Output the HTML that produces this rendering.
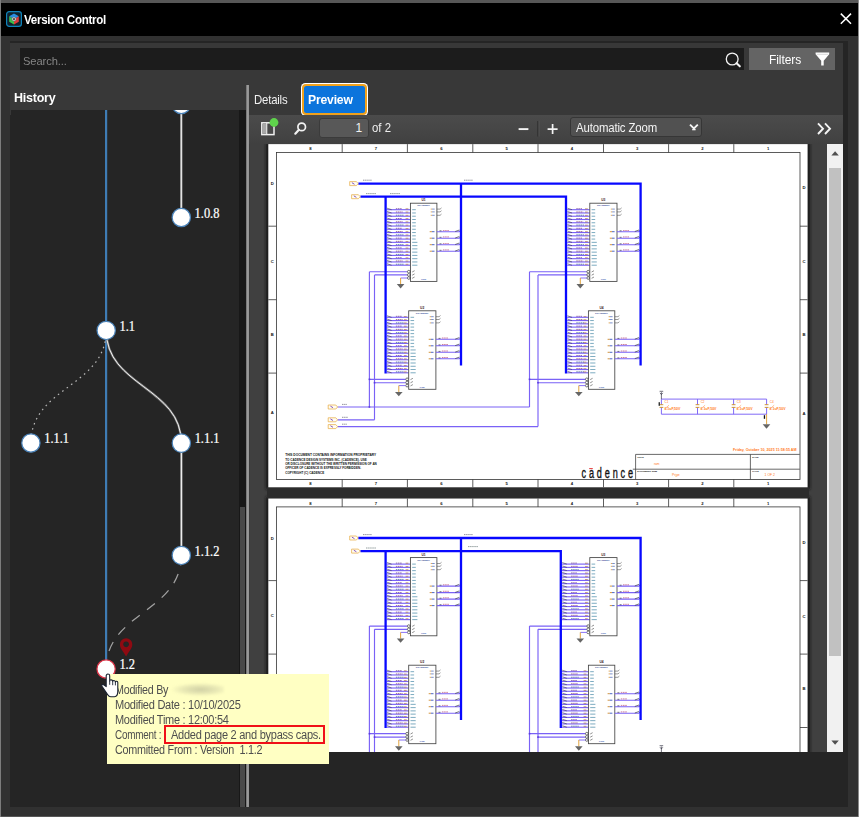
<!DOCTYPE html>
<html lang="en"><head><meta charset="utf-8"><title>Version Control</title>
<style>
*{box-sizing:border-box;margin:0;padding:0}
.sx{display:inline-block;transform-origin:0 50%;white-space:pre}
html,body{width:859px;height:817px;overflow:hidden}
body{position:relative;background:linear-gradient(90deg,#7c7c7c 0,#7c7c7c 1.4px,#575757 1.4px,#575757 857.8px,#8a8a8a 857.8px);font-family:"Liberation Sans",sans-serif;color:#fff}
.abs{position:absolute}
.win{left:1.4px;top:2.5px;width:856.4px;height:813.2px;background:#313131}
.title{left:1.4px;top:2.5px;width:856.6px;height:33px;background:#000}
.title .txt{left:23px;top:9.2px;font-size:12.4px;font-weight:bold;white-space:nowrap;line-height:16px}
.inner{left:10.4px;top:41px;width:837.6px;height:765.6px;background:#252525}
.top{left:10.4px;top:43px;width:832.8px;height:71.5px;background:#383838}
.search{left:20px;top:48px;width:724px;height:22.4px;background:#1c1c1c}
.search .ph{left:2.8px;top:5.2px;font-size:11.6px;color:#858585;line-height:16px}
.filters{left:749px;top:48px;width:86px;height:22.4px;background:#646464}
.filters .txt{left:20px;top:4.3px;font-size:12.4px;line-height:16px;color:#fff}
.hist{left:14.4px;top:89.6px;font-size:13.2px;font-weight:bold;line-height:16px}
.graphbox{left:10.5px;top:109.5px;width:229px;height:697px;background:#252525;overflow:hidden}
.graph{display:block}
.track{left:239.3px;top:109.5px;width:6.6px;height:697px;background:#181818}
.thumb{left:240px;top:507px;width:4.9px;height:299.6px;background:#494949}
.split{left:246px;top:84.8px;width:3.1px;height:721.8px;background:linear-gradient(90deg,#6a6a6a,#a2a2a2 60%,#8c8c8c)}
.tabtxt{left:253.6px;top:92.4px;font-size:12.2px;line-height:16px;color:#f0f0f0}
.tabsel{left:300.8px;top:83.3px;width:67.6px;height:32.7px;border-radius:4.5px;background:#fff;}
.tabsel .o{left:1px;top:1px;right:1px;bottom:1px;border-radius:4px;background:#f0a11c}
.tabsel .b{left:3px;top:3px;right:3px;bottom:3px;border-radius:2.5px;background:#0b74dc}
.tabsel .txt{left:7px;top:9.2px;font-size:12.6px;font-weight:bold;line-height:16px;color:#fff}
.tool{left:249.2px;top:114.5px;width:594px;height:29.6px;background:linear-gradient(#4b4b4b,#454545 60%,#404040)}
.viewer{position:absolute;left:250px;top:144px;display:block}
.vleft{left:249.2px;top:144px;width:0.8px;height:608px;background:#3c3c3c}
.sb{left:827px;top:144px;width:16.2px;height:608px;background:#f1f1f1}
.sbthumb{left:829.4px;top:167.5px;width:11.6px;height:488.5px;background:#c1c1c1}
.pgin{left:318.8px;top:117.9px;width:50px;height:19.8px;border-radius:3px;background:#585858;border:1px solid #3b3b3b}
.pgin .txt{right:5.6px;top:2px;font-size:12px;line-height:15px;color:#f2f2f2}
.of{left:372.4px;top:121px;font-size:12px;line-height:15px;color:#f0f0f0}
.sel{left:569.8px;top:117.2px;width:132.6px;height:20.2px;border-radius:3px;background:#515151;border:1px solid #363636}
.sel .txt{left:5.2px;top:2.7px;font-size:12px;line-height:15px;color:#f4f4f4;white-space:nowrap}
.tip{left:107px;top:673.8px;width:222.2px;height:90.4px;background:#ffffc3}
.tip .l{left:8.4px;font-size:12px;line-height:15px;color:#4e4e4e;white-space:pre}
.red{left:164.2px;top:724.8px;width:160.4px;height:19.6px;border:2.6px solid #f01018}
.blur{left:171px;top:683px;width:53px;height:13px;background:radial-gradient(ellipse at 55% 50%,rgba(170,170,140,.55),rgba(200,200,160,.38) 45%,rgba(255,255,195,0) 72%);filter:blur(1.2px)}
</style></head><body>
<div class="abs win"></div>
<div class="abs title">
<svg class="abs" style="left:4.4px;top:8.4px" width="16" height="16" viewBox="0 0 16 16"><rect x="0.6" y="0.6" width="14.8" height="14.8" rx="2.6" fill="#10222c" stroke="#0f84bc" stroke-width="1.2"/><path d="M8,2.6L12.8,5.3L10.2,6.9L8,5.7L5.8,6.9L3.2,5.3z" fill="#2a8fe0"/><path d="M12.8,5.3V10.8L8,13.5V10.6L10.2,9.3V6.9z" fill="#e03a3a"/><path d="M3.2,5.3V10.8L8,13.5V10.6L5.8,9.3V6.9z" fill="#3cc04a"/><path d="M8,5.7L10.2,6.9V9.3L8,10.6L5.8,9.3V6.9z" fill="#b8b8b8"/><rect x="7" y="7.2" width="2" height="1.8" fill="#555"/></svg>
<div class="abs txt"><span class="sx" style="letter-spacing:-0.3px;transform:scaleX(0.9348)">Version Control</span></div>
<svg class="abs" style="left:838px;top:9.5px" width="14" height="14" viewBox="0 0 14 14"><path d="M1.8,1.6L12,11.8M12,1.6L1.8,11.8" stroke="#fff" stroke-width="1.5"/></svg>
</div>
<div class="abs inner"></div>
<div class="abs top"></div>
<div class="abs search"><div class="abs ph"><span class="sx" style="letter-spacing:-0.1px;transform:scaleX(0.9621)">Search...</span></div><svg class="abs" style="left:703px;top:2.6px" width="20" height="18" viewBox="0 0 20 18"><circle cx="9.2" cy="8" r="5.9" fill="none" stroke="#f4f4f4" stroke-width="1.3"/><path d="M13.6,12.3L16.8,15.3" stroke="#f4f4f4" stroke-width="2.1" stroke-linecap="round"/></svg></div>
<div class="abs filters"><div class="abs txt"><span class="sx" style="letter-spacing:-0.1px;transform:scaleX(0.9711)">Filters</span></div><svg class="abs" style="left:65px;top:3px" width="18" height="17" viewBox="0 0 18 17"><path d="M1.6,1.6H15.2V3.2L9.7,9.8V14.4L7.2,14.4V9.8L1.6,3.2z" fill="#fff"/><path d="M2.6,3.3H14.2" stroke="#d0d0d0" stroke-width="0.8"/></svg></div>
<div class="abs hist"><span class="sx" style="letter-spacing:-0.25px;transform:scaleX(0.9490)">History</span></div>
<div class="abs graphbox"><svg class="graph" width="229" height="697" viewBox="10.5 109.5 229 697" font-family="Liberation Serif, serif" font-size="13.8">
<path d="M105.6,100V660" stroke="#3f7cb4" stroke-width="2.2"/>
<path d="M180.8,100V217" stroke="#8a8a8a" stroke-width="2.4"/><path d="M180.8,100V217" stroke="#f2f2f2" stroke-width="1.1"/>
<path d="M180.9,442V555" stroke="#8a8a8a" stroke-width="2.4"/><path d="M180.9,442V555" stroke="#f2f2f2" stroke-width="1.1"/>
<path d="M105.7,329.9C105.7,386.25 180.85,386.25 180.85,442.6" stroke="#777" stroke-width="2.2" fill="none"/><path d="M105.7,329.9C105.7,386.25 180.85,386.25 180.85,442.6" stroke="#f0f0f0" stroke-width="1" fill="none"/>
<path d="M105.7,329.9C105.7,386.20 30.4,386.20 30.4,442.5" stroke="#b8b8b8" stroke-width="1.2" fill="none" stroke-dasharray="1.6 3.9"/>
<path d="M180.8,554.9C180.8,611.70 105.6,611.70 105.6,668.5" stroke="#a2a2a2" stroke-width="1.25" fill="none" stroke-dasharray="10 9"/>
<circle cx="180.8" cy="104" r="9.15" fill="#fff" stroke="#4a82b8" stroke-width="1.25"/>
<circle cx="180.8" cy="217" r="9.15" fill="#fff" stroke="#4a82b8" stroke-width="1.25"/>
<text transform="translate(194.1,217.3) scale(0.9,1)" fill="#fff" stroke="#fff" stroke-width="0.25">1.0.8</text>
<circle cx="105.7" cy="329.9" r="9.15" fill="#fff" stroke="#4a82b8" stroke-width="1.25"/>
<text transform="translate(119,330.2) scale(0.9,1)" fill="#fff" stroke="#fff" stroke-width="0.25">1.1</text>
<circle cx="30.4" cy="442.5" r="9.15" fill="#fff" stroke="#4a82b8" stroke-width="1.25"/>
<text transform="translate(43.7,442.8) scale(0.9,1)" fill="#fff" stroke="#fff" stroke-width="0.25">1.1.1</text>
<circle cx="180.85" cy="442.6" r="9.15" fill="#fff" stroke="#4a82b8" stroke-width="1.25"/>
<text transform="translate(194.15,442.9) scale(0.9,1)" fill="#fff" stroke="#fff" stroke-width="0.25">1.1.1</text>
<circle cx="180.8" cy="554.9" r="9.15" fill="#fff" stroke="#4a82b8" stroke-width="1.25"/>
<text transform="translate(194.1,555.2) scale(0.9,1)" fill="#fff" stroke="#fff" stroke-width="0.25">1.1.2</text>
<circle cx="105.6" cy="668.5" r="9.15" fill="#fff" stroke="#dc3448" stroke-width="1.25"/>
<text transform="translate(118.9,668.8) scale(0.9,1)" fill="#fff" stroke="#fff" stroke-width="0.25">1.2</text>
<path transform="translate(-0.7,0)" d="M126.3,655.9C123.6,651 120.1,647.6 120.1,643.9a6.2,6.2 0 1 1 12.4,0C132.5,647.6 129,651 126.3,655.9zM126.3,640.9a2.9,2.9 0 1 0 0.01,0z" fill="#8e0a12" fill-rule="evenodd"/>
</svg></div>
<div class="abs track"></div><div class="abs thumb"></div>
<div class="abs split"></div>
<div class="abs tabtxt"><span class="sx" style="letter-spacing:-0.2px;transform:scaleX(0.9334)">Details</span></div>
<div class="abs tabsel"><div class="abs o"></div><div class="abs b"></div><div class="abs txt"><span class="sx" style="letter-spacing:-0.2px;transform:scaleX(0.9669)">Preview</span></div></div>
<div class="abs tool"></div>
<svg class="abs" style="left:259px;top:116px" width="52" height="24" viewBox="259 116 52 24"><rect x="261.8" y="122.8" width="12.2" height="11.8" fill="#4a4a4a" stroke="#f0f0f0" stroke-width="1.5"/><rect x="262.6" y="123.6" width="4" height="10.2" fill="#a8a8a8"/><rect x="266.2" y="123" width="1.1" height="11.4" fill="#f0f0f0"/><circle cx="274" cy="122.5" r="4.4" fill="#5fd44c"/><circle cx="301.7" cy="126.9" r="3.8" fill="none" stroke="#f2f2f2" stroke-width="1.7"/><path d="M298.9,129.8L295.3,133.7" stroke="#f2f2f2" stroke-width="2.2" stroke-linecap="round"/></svg>
<div class="abs pgin"><div class="abs txt">1</div></div><div class="abs of"><span class="sx" style="letter-spacing:0px;transform:scaleX(0.9493)">of 2</span></div>
<svg class="abs" style="left:514px;top:118px" width="48" height="22" viewBox="514 118 48 22"><path d="M518.6,129.1h9.8" stroke="#f4f4f4" stroke-width="1.9"/><path d="M537.9,121v15.5" stroke="#2f2f2f" stroke-width="1.3"/><path d="M539,121v15.5" stroke="#585858" stroke-width="0.8"/><path d="M547.6,129.1h10M552.6,124.1v10" stroke="#f4f4f4" stroke-width="1.7"/></svg>
<div class="abs sel"><div class="abs txt"><span class="sx" style="letter-spacing:-0.15px;transform:scaleX(0.9500)">Automatic Zoom</span></div><svg class="abs" style="left:117.6px;top:5.2px" width="12" height="10" viewBox="0 0 12 10"><path d="M2,1.6L5.9,5.4L9.8,1.6" stroke="#f4f4f4" stroke-width="1.9" fill="none"/><path d="M4.2,6.6h3.4" stroke="#f4f4f4" stroke-width="1.4"/></svg></div>
<svg class="abs" style="left:815px;top:121px" width="18" height="16" viewBox="815 121 18 16"><path d="M818,123.4l5,5.3l-5,5.3M825,123.4l5,5.3l-5,5.3" stroke="#f4f4f4" stroke-width="1.9" fill="none"/></svg>
<div class="abs vleft"></div>
<svg class="viewer" width="577" height="608" viewBox="250 144 577 608">
<defs><linearGradient id="vg" x1="0" x2="1" y1="0" y2="0"><stop offset="0" stop-color="#3a3a3a"/><stop offset="0.5" stop-color="#454545"/><stop offset="1" stop-color="#3c3c3c"/></linearGradient></defs>
<rect x="250" y="144" width="577" height="608" fill="#404040"/>
<filter id="sh" x="-5%" y="-5%" width="110%" height="110%"><feGaussianBlur stdDeviation="1.5"/></filter>
<rect x="266" y="142.4" width="544" height="347" fill="#161616" filter="url(#sh)"/>
<rect x="266" y="496.6" width="544" height="347" fill="#161616" filter="url(#sh)"/>
<rect x="267" y="487.3" width="542" height="10.7" fill="#2c2c2c"/>
<g transform="translate(0,0)" font-family="Liberation Sans, sans-serif">
<rect x="268.3" y="144.1" width="539.3" height="343.2" fill="#fff"/>
<rect x="276.4" y="152.5" width="523.6" height="327" fill="none" stroke="#333" stroke-width="0.8"/>
<path d="M342.2,144.1V152.5M342.2,479.5V487.3M407.4,144.1V152.5M407.4,479.5V487.3M472.8,144.1V152.5M472.8,479.5V487.3M538,144.1V152.5M538,479.5V487.3M603.5,144.1V152.5M603.5,479.5V487.3M668.6,144.1V152.5M668.6,479.5V487.3M733.8,144.1V152.5M733.8,479.5V487.3M268.3,226.2H276.4M800,226.2H807.6M268.3,299.7H276.4M800,299.7H807.6M268.3,373.1H276.4M800,373.1H807.6" stroke="#333" stroke-width="0.8"/>
<text x="310.5" y="150.4" font-size="4.2" font-weight="bold" text-anchor="middle" fill="#111">8</text>
<text x="310.5" y="485.2" font-size="4.2" font-weight="bold" text-anchor="middle" fill="#111">8</text>
<text x="376" y="150.4" font-size="4.2" font-weight="bold" text-anchor="middle" fill="#111">7</text>
<text x="376" y="485.2" font-size="4.2" font-weight="bold" text-anchor="middle" fill="#111">7</text>
<text x="441.3" y="150.4" font-size="4.2" font-weight="bold" text-anchor="middle" fill="#111">6</text>
<text x="441.3" y="485.2" font-size="4.2" font-weight="bold" text-anchor="middle" fill="#111">6</text>
<text x="506.6" y="150.4" font-size="4.2" font-weight="bold" text-anchor="middle" fill="#111">5</text>
<text x="506.6" y="485.2" font-size="4.2" font-weight="bold" text-anchor="middle" fill="#111">5</text>
<text x="571.95" y="150.4" font-size="4.2" font-weight="bold" text-anchor="middle" fill="#111">4</text>
<text x="571.95" y="485.2" font-size="4.2" font-weight="bold" text-anchor="middle" fill="#111">4</text>
<text x="637.25" y="150.4" font-size="4.2" font-weight="bold" text-anchor="middle" fill="#111">3</text>
<text x="637.25" y="485.2" font-size="4.2" font-weight="bold" text-anchor="middle" fill="#111">3</text>
<text x="702.4" y="150.4" font-size="4.2" font-weight="bold" text-anchor="middle" fill="#111">2</text>
<text x="702.4" y="485.2" font-size="4.2" font-weight="bold" text-anchor="middle" fill="#111">2</text>
<text x="768.1" y="150.4" font-size="4.2" font-weight="bold" text-anchor="middle" fill="#111">1</text>
<text x="768.1" y="485.2" font-size="4.2" font-weight="bold" text-anchor="middle" fill="#111">1</text>
<text x="272.3" y="185.2" font-size="4.2" font-weight="bold" text-anchor="middle" fill="#111">D</text>
<text x="804" y="189.2" font-size="4.2" font-weight="bold" text-anchor="middle" fill="#111">D</text>
<text x="272.3" y="263" font-size="4.2" font-weight="bold" text-anchor="middle" fill="#111">C</text>
<text x="804" y="263.4" font-size="4.2" font-weight="bold" text-anchor="middle" fill="#111">C</text>
<text x="272.3" y="335.7" font-size="4.2" font-weight="bold" text-anchor="middle" fill="#111">B</text>
<text x="804" y="336.1" font-size="4.2" font-weight="bold" text-anchor="middle" fill="#111">B</text>
<text x="272.3" y="414.1" font-size="4.2" font-weight="bold" text-anchor="middle" fill="#111">A</text>
<text x="804" y="414.5" font-size="4.2" font-weight="bold" text-anchor="middle" fill="#111">A</text>
<path d="M369.4,271.7H407.4M374.5,274.9H407.4M369.4,379.3H405.7M374.5,382.7H405.7M369.4,271.7V407M374.5,274.9V419.8M529.5,271.7H586.8M538,274.9H586.8M529.5,379.3H585.4M538,382.7H585.4M529.5,271.7V407M538,274.9V426.6M337.5,407H529.5M337.5,419.8H374.5M337.5,426.6H538" stroke="#7a62f6" stroke-width="1.15" fill="none"/>
<rect x="368.6" y="378.5" width="1.6" height="1.6" fill="#5a3ae0"/>
<rect x="373.7" y="381.9" width="1.6" height="1.6" fill="#5a3ae0"/>
<rect x="528.7" y="378.5" width="1.6" height="1.6" fill="#5a3ae0"/>
<rect x="537.2" y="381.9" width="1.6" height="1.6" fill="#5a3ae0"/>
<rect x="368.6" y="406.2" width="1.6" height="1.6" fill="#5a3ae0"/>
<path d="M386.8,209.7H410.2" stroke="#7a62f6" stroke-width="1.15"/>
<path d="M387,208.2l4.6,1.5" stroke="#3a3a48" stroke-width="0.7" opacity="0.85"/>
<path d="M395.9,208.7h6.2" stroke="#6a3a8a" stroke-width="0.9" stroke-dasharray="1.5 0.6" opacity="0.8"/>
<path d="M405.6,208.8h2.8" stroke="#a0602a" stroke-width="0.7" opacity="0.85"/>
<path d="M412.2,209.7h3.6" stroke="#4a8aa8" stroke-width="0.9" opacity="0.8"/>
<path d="M386.8,212.97H410.2" stroke="#7a62f6" stroke-width="1.15"/>
<path d="M387,211.47l4.6,1.5" stroke="#3a3a48" stroke-width="0.7" opacity="0.85"/>
<path d="M395.9,211.97h6.9" stroke="#80406a" stroke-width="0.9" stroke-dasharray="1.5 0.6" opacity="0.8"/>
<path d="M405.6,212.06h2.8" stroke="#a0602a" stroke-width="0.7" opacity="0.85"/>
<path d="M412.2,212.97h3.6" stroke="#4a8aa8" stroke-width="0.9" opacity="0.8"/>
<path d="M386.8,216.23H410.2" stroke="#7a62f6" stroke-width="1.15"/>
<path d="M387,214.73l4.6,1.5" stroke="#3a3a48" stroke-width="0.7" opacity="0.85"/>
<path d="M395.9,215.23h7.6" stroke="#3a5a8a" stroke-width="0.9" stroke-dasharray="1.5 0.6" opacity="0.8"/>
<path d="M405.6,215.33h2.8" stroke="#a0602a" stroke-width="0.7" opacity="0.85"/>
<path d="M412.2,216.23h3.6" stroke="#4a8aa8" stroke-width="0.9" opacity="0.8"/>
<path d="M386.8,219.5H410.2" stroke="#7a62f6" stroke-width="1.15"/>
<path d="M387,218l4.6,1.5" stroke="#3a3a48" stroke-width="0.7" opacity="0.85"/>
<path d="M395.9,218.5h6.2" stroke="#6a3a8a" stroke-width="0.9" stroke-dasharray="1.5 0.6" opacity="0.8"/>
<path d="M405.6,218.59h2.8" stroke="#a0602a" stroke-width="0.7" opacity="0.85"/>
<path d="M412.2,219.5h3.6" stroke="#4a8aa8" stroke-width="0.9" opacity="0.8"/>
<path d="M386.8,222.76H410.2" stroke="#7a62f6" stroke-width="1.15"/>
<path d="M387,221.26l4.6,1.5" stroke="#3a3a48" stroke-width="0.7" opacity="0.85"/>
<path d="M395.9,221.76h6.9" stroke="#80406a" stroke-width="0.9" stroke-dasharray="1.5 0.6" opacity="0.8"/>
<path d="M405.6,221.86h2.8" stroke="#a0602a" stroke-width="0.7" opacity="0.85"/>
<path d="M412.2,222.76h3.6" stroke="#4a8aa8" stroke-width="0.9" opacity="0.8"/>
<path d="M386.8,226.03H410.2" stroke="#7a62f6" stroke-width="1.15"/>
<path d="M387,224.53l4.6,1.5" stroke="#3a3a48" stroke-width="0.7" opacity="0.85"/>
<path d="M395.9,225.03h7.6" stroke="#3a5a8a" stroke-width="0.9" stroke-dasharray="1.5 0.6" opacity="0.8"/>
<path d="M405.6,225.12h2.8" stroke="#a0602a" stroke-width="0.7" opacity="0.85"/>
<path d="M412.2,226.03h3.6" stroke="#4a8aa8" stroke-width="0.9" opacity="0.8"/>
<path d="M386.8,229.29H410.2" stroke="#7a62f6" stroke-width="1.15"/>
<path d="M387,227.79l4.6,1.5" stroke="#3a3a48" stroke-width="0.7" opacity="0.85"/>
<path d="M395.9,228.29h6.2" stroke="#6a3a8a" stroke-width="0.9" stroke-dasharray="1.5 0.6" opacity="0.8"/>
<path d="M405.6,228.39h2.8" stroke="#a0602a" stroke-width="0.7" opacity="0.85"/>
<path d="M412.2,229.29h3.6" stroke="#4a8aa8" stroke-width="0.9" opacity="0.8"/>
<path d="M386.8,232.56H410.2" stroke="#7a62f6" stroke-width="1.15"/>
<path d="M387,231.06l4.6,1.5" stroke="#3a3a48" stroke-width="0.7" opacity="0.85"/>
<path d="M395.9,231.56h6.9" stroke="#80406a" stroke-width="0.9" stroke-dasharray="1.5 0.6" opacity="0.8"/>
<path d="M405.6,231.66h2.8" stroke="#a0602a" stroke-width="0.7" opacity="0.85"/>
<path d="M412.2,232.56h3.6" stroke="#4a8aa8" stroke-width="0.9" opacity="0.8"/>
<path d="M386.8,235.82H410.2" stroke="#7a62f6" stroke-width="1.15"/>
<path d="M387,234.32l4.6,1.5" stroke="#3a3a48" stroke-width="0.7" opacity="0.85"/>
<path d="M395.9,234.82h7.6" stroke="#3a5a8a" stroke-width="0.9" stroke-dasharray="1.5 0.6" opacity="0.8"/>
<path d="M405.6,234.92h2.8" stroke="#a0602a" stroke-width="0.7" opacity="0.85"/>
<path d="M412.2,235.82h3.6" stroke="#4a8aa8" stroke-width="0.9" opacity="0.8"/>
<path d="M386.8,239.09H410.2" stroke="#7a62f6" stroke-width="1.15"/>
<path d="M387,237.59l4.6,1.5" stroke="#3a3a48" stroke-width="0.7" opacity="0.85"/>
<path d="M395.9,238.09h6.2" stroke="#6a3a8a" stroke-width="0.9" stroke-dasharray="1.5 0.6" opacity="0.8"/>
<path d="M405.6,238.19h2.8" stroke="#a0602a" stroke-width="0.7" opacity="0.85"/>
<path d="M412.2,239.09h3.6" stroke="#4a8aa8" stroke-width="0.9" opacity="0.8"/>
<path d="M386.8,242.35H410.2" stroke="#7a62f6" stroke-width="1.15"/>
<path d="M387,240.85l4.6,1.5" stroke="#3a3a48" stroke-width="0.7" opacity="0.85"/>
<path d="M395.9,241.35h6.9" stroke="#80406a" stroke-width="0.9" stroke-dasharray="1.5 0.6" opacity="0.8"/>
<path d="M405.6,241.45h2.8" stroke="#a0602a" stroke-width="0.7" opacity="0.85"/>
<path d="M412.2,242.35h5.2" stroke="#4a8aa8" stroke-width="0.9" opacity="0.8"/>
<path d="M386.8,245.62H410.2" stroke="#7a62f6" stroke-width="1.15"/>
<path d="M387,244.12l4.6,1.5" stroke="#3a3a48" stroke-width="0.7" opacity="0.85"/>
<path d="M395.9,244.62h7.6" stroke="#3a5a8a" stroke-width="0.9" stroke-dasharray="1.5 0.6" opacity="0.8"/>
<path d="M405.6,244.72h2.8" stroke="#a0602a" stroke-width="0.7" opacity="0.85"/>
<path d="M412.2,245.62h5.2" stroke="#4a8aa8" stroke-width="0.9" opacity="0.8"/>
<path d="M386.8,248.88H410.2" stroke="#7a62f6" stroke-width="1.15"/>
<path d="M387,247.38l4.6,1.5" stroke="#3a3a48" stroke-width="0.7" opacity="0.85"/>
<path d="M395.9,247.88h6.2" stroke="#6a3a8a" stroke-width="0.9" stroke-dasharray="1.5 0.6" opacity="0.8"/>
<path d="M405.6,247.98h2.8" stroke="#a0602a" stroke-width="0.7" opacity="0.85"/>
<path d="M412.2,248.88h5.2" stroke="#4a8aa8" stroke-width="0.9" opacity="0.8"/>
<path d="M386.8,252.15H410.2" stroke="#7a62f6" stroke-width="1.15"/>
<path d="M387,250.65l4.6,1.5" stroke="#3a3a48" stroke-width="0.7" opacity="0.85"/>
<path d="M395.9,251.15h6.9" stroke="#80406a" stroke-width="0.9" stroke-dasharray="1.5 0.6" opacity="0.8"/>
<path d="M405.6,251.25h2.8" stroke="#a0602a" stroke-width="0.7" opacity="0.85"/>
<path d="M412.2,252.15h5.2" stroke="#4a8aa8" stroke-width="0.9" opacity="0.8"/>
<path d="M386.8,255.41H410.2" stroke="#7a62f6" stroke-width="1.15"/>
<path d="M387,253.91l4.6,1.5" stroke="#3a3a48" stroke-width="0.7" opacity="0.85"/>
<path d="M395.9,254.41h7.6" stroke="#3a5a8a" stroke-width="0.9" stroke-dasharray="1.5 0.6" opacity="0.8"/>
<path d="M405.6,254.51h2.8" stroke="#a0602a" stroke-width="0.7" opacity="0.85"/>
<path d="M412.2,255.41h5.2" stroke="#4a8aa8" stroke-width="0.9" opacity="0.8"/>
<path d="M386.8,258.68H410.2" stroke="#7a62f6" stroke-width="1.15"/>
<path d="M387,257.18l4.6,1.5" stroke="#3a3a48" stroke-width="0.7" opacity="0.85"/>
<path d="M395.9,257.68h6.2" stroke="#6a3a8a" stroke-width="0.9" stroke-dasharray="1.5 0.6" opacity="0.8"/>
<path d="M405.6,257.78h2.8" stroke="#a0602a" stroke-width="0.7" opacity="0.85"/>
<path d="M412.2,258.68h5.2" stroke="#4a8aa8" stroke-width="0.9" opacity="0.8"/>
<path d="M386.8,261.94H410.2" stroke="#7a62f6" stroke-width="1.15"/>
<path d="M387,260.44l4.6,1.5" stroke="#3a3a48" stroke-width="0.7" opacity="0.85"/>
<path d="M395.9,260.94h6.9" stroke="#80406a" stroke-width="0.9" stroke-dasharray="1.5 0.6" opacity="0.8"/>
<path d="M405.6,261.04h2.8" stroke="#a0602a" stroke-width="0.7" opacity="0.85"/>
<path d="M412.2,261.94h5.2" stroke="#4a8aa8" stroke-width="0.9" opacity="0.8"/>
<path d="M386.8,265.21H410.2" stroke="#7a62f6" stroke-width="1.15"/>
<path d="M387,263.71l4.6,1.5" stroke="#3a3a48" stroke-width="0.7" opacity="0.85"/>
<path d="M395.9,264.21h7.6" stroke="#3a5a8a" stroke-width="0.9" stroke-dasharray="1.5 0.6" opacity="0.8"/>
<path d="M405.6,264.31h2.8" stroke="#a0602a" stroke-width="0.7" opacity="0.85"/>
<path d="M412.2,265.21h5.2" stroke="#4a8aa8" stroke-width="0.9" opacity="0.8"/>
<rect x="410.4" y="203.2" width="26.5" height="78.2" fill="none" stroke="#444" stroke-width="0.85"/>
<path d="M436.9,209.1h3.2l1.4,-1.2" stroke="#444" stroke-width="0.55" fill="none"/>
<path d="M430.7,209.1h1.4" stroke="#d08a28" stroke-width="0.9" opacity="0.8"/><path d="M432.1,209.1h2.6" stroke="#4a68b8" stroke-width="0.9" opacity="0.8"/>
<path d="M436.9,211.9h3.2l1.4,-1.2" stroke="#444" stroke-width="0.55" fill="none"/>
<path d="M430.7,211.9h1.4" stroke="#d08a28" stroke-width="0.9" opacity="0.8"/><path d="M432.1,211.9h2.6" stroke="#4a68b8" stroke-width="0.9" opacity="0.8"/>
<path d="M436.9,215.3h3.2l1.4,-1.2" stroke="#444" stroke-width="0.55" fill="none"/>
<path d="M430.7,215.3h1.4" stroke="#d08a28" stroke-width="0.9" opacity="0.8"/><path d="M432.1,215.3h2.6" stroke="#4a68b8" stroke-width="0.9" opacity="0.8"/>
<path d="M436.9,231.7H459.2l1.4,-1.3" stroke="#7a62f6" stroke-width="1.1" fill="none"/>
<path d="M442.9,230.4h6.5" stroke="#b03a6a" stroke-width="0.8" stroke-dasharray="1.6 0.6" opacity="0.8"/>
<path d="M439.5,230.8h2M455.2,231.5l4.2,-1.5" stroke="#3a3a48" stroke-width="0.7" fill="none"/>
<path d="M429.7,231.7h2.2" stroke="#d08a28" stroke-width="0.9"/><path d="M431.9,231.7h2.6" stroke="#3a58c0" stroke-width="0.9"/>
<path d="M436.9,238.2H459.2l1.4,-1.3" stroke="#7a62f6" stroke-width="1.1" fill="none"/>
<path d="M442.9,236.9h6.5" stroke="#b03a6a" stroke-width="0.8" stroke-dasharray="1.6 0.6" opacity="0.8"/>
<path d="M439.5,237.3h2M455.2,238l4.2,-1.5" stroke="#3a3a48" stroke-width="0.7" fill="none"/>
<path d="M429.7,238.2h2.2" stroke="#d08a28" stroke-width="0.9"/><path d="M431.9,238.2h2.6" stroke="#3a58c0" stroke-width="0.9"/>
<path d="M436.9,244.7H459.2l1.4,-1.3" stroke="#7a62f6" stroke-width="1.1" fill="none"/>
<path d="M442.9,243.4h6.5" stroke="#b03a6a" stroke-width="0.8" stroke-dasharray="1.6 0.6" opacity="0.8"/>
<path d="M439.5,243.8h2M455.2,244.5l4.2,-1.5" stroke="#3a3a48" stroke-width="0.7" fill="none"/>
<path d="M429.7,244.7h2.2" stroke="#d08a28" stroke-width="0.9"/><path d="M431.9,244.7h2.6" stroke="#3a58c0" stroke-width="0.9"/>
<path d="M436.9,251.2H459.2l1.4,-1.3" stroke="#7a62f6" stroke-width="1.1" fill="none"/>
<path d="M442.9,249.9h6.5" stroke="#b03a6a" stroke-width="0.8" stroke-dasharray="1.6 0.6" opacity="0.8"/>
<path d="M439.5,250.3h2M455.2,251l4.2,-1.5" stroke="#3a3a48" stroke-width="0.7" fill="none"/>
<path d="M429.7,251.2h2.2" stroke="#d08a28" stroke-width="0.9"/><path d="M431.9,251.2h2.6" stroke="#3a58c0" stroke-width="0.9"/>
<circle cx="408.8" cy="271.7" r="1.35" fill="#fff" stroke="#222" stroke-width="0.6"/>
<path d="M412.2,272l2.4,-1.3" stroke="#444" stroke-width="0.6"/>
<circle cx="408.8" cy="274.9" r="1.35" fill="#fff" stroke="#222" stroke-width="0.6"/>
<path d="M412.2,275.2l2.4,-1.3" stroke="#444" stroke-width="0.6"/>
<circle cx="408.8" cy="278" r="1.35" fill="#fff" stroke="#222" stroke-width="0.6"/>
<path d="M412.2,278.3l2.4,-1.3" stroke="#444" stroke-width="0.6"/>
<text x="423.55" y="201.3" font-size="3.3" font-weight="bold" text-anchor="middle" fill="#422">U1</text>
<text x="423.55" y="206.3" font-size="2.4" font-weight="bold" text-anchor="middle" fill="#4a5aa0">SRAM256K</text>
<text x="423.55" y="280" font-size="2.4" font-weight="bold" text-anchor="middle" fill="#4a68b8">GND</text>
<path d="M407.4,278H400.6" stroke="#7a62f6" stroke-width="0.9" fill="none"/>
<path d="M400.6,278V284.1" stroke="#e09a28" stroke-width="0.9" fill="none"/>
<path d="M396.8,284h7.6l-3.8,4.4z" fill="#666"/>
<path d="M386.8,317.3H408.5" stroke="#7a62f6" stroke-width="1.15"/>
<path d="M387,315.8l4.6,1.5" stroke="#3a3a48" stroke-width="0.7" opacity="0.85"/>
<path d="M395.9,316.3h6.2" stroke="#6a3a8a" stroke-width="0.9" stroke-dasharray="1.5 0.6" opacity="0.8"/>
<path d="M403.9,316.4h2.8" stroke="#a0602a" stroke-width="0.7" opacity="0.85"/>
<path d="M410.5,317.3h3.6" stroke="#4a8aa8" stroke-width="0.9" opacity="0.8"/>
<path d="M386.8,320.56H408.5" stroke="#7a62f6" stroke-width="1.15"/>
<path d="M387,319.06l4.6,1.5" stroke="#3a3a48" stroke-width="0.7" opacity="0.85"/>
<path d="M395.9,319.56h6.9" stroke="#80406a" stroke-width="0.9" stroke-dasharray="1.5 0.6" opacity="0.8"/>
<path d="M403.9,319.66h2.8" stroke="#a0602a" stroke-width="0.7" opacity="0.85"/>
<path d="M410.5,320.56h3.6" stroke="#4a8aa8" stroke-width="0.9" opacity="0.8"/>
<path d="M386.8,323.83H408.5" stroke="#7a62f6" stroke-width="1.15"/>
<path d="M387,322.33l4.6,1.5" stroke="#3a3a48" stroke-width="0.7" opacity="0.85"/>
<path d="M395.9,322.83h7.6" stroke="#3a5a8a" stroke-width="0.9" stroke-dasharray="1.5 0.6" opacity="0.8"/>
<path d="M403.9,322.93h2.8" stroke="#a0602a" stroke-width="0.7" opacity="0.85"/>
<path d="M410.5,323.83h3.6" stroke="#4a8aa8" stroke-width="0.9" opacity="0.8"/>
<path d="M386.8,327.09H408.5" stroke="#7a62f6" stroke-width="1.15"/>
<path d="M387,325.59l4.6,1.5" stroke="#3a3a48" stroke-width="0.7" opacity="0.85"/>
<path d="M395.9,326.09h6.2" stroke="#6a3a8a" stroke-width="0.9" stroke-dasharray="1.5 0.6" opacity="0.8"/>
<path d="M403.9,326.19h2.8" stroke="#a0602a" stroke-width="0.7" opacity="0.85"/>
<path d="M410.5,327.09h3.6" stroke="#4a8aa8" stroke-width="0.9" opacity="0.8"/>
<path d="M386.8,330.36H408.5" stroke="#7a62f6" stroke-width="1.15"/>
<path d="M387,328.86l4.6,1.5" stroke="#3a3a48" stroke-width="0.7" opacity="0.85"/>
<path d="M395.9,329.36h6.9" stroke="#80406a" stroke-width="0.9" stroke-dasharray="1.5 0.6" opacity="0.8"/>
<path d="M403.9,329.46h2.8" stroke="#a0602a" stroke-width="0.7" opacity="0.85"/>
<path d="M410.5,330.36h3.6" stroke="#4a8aa8" stroke-width="0.9" opacity="0.8"/>
<path d="M386.8,333.62H408.5" stroke="#7a62f6" stroke-width="1.15"/>
<path d="M387,332.12l4.6,1.5" stroke="#3a3a48" stroke-width="0.7" opacity="0.85"/>
<path d="M395.9,332.62h7.6" stroke="#3a5a8a" stroke-width="0.9" stroke-dasharray="1.5 0.6" opacity="0.8"/>
<path d="M403.9,332.72h2.8" stroke="#a0602a" stroke-width="0.7" opacity="0.85"/>
<path d="M410.5,333.62h3.6" stroke="#4a8aa8" stroke-width="0.9" opacity="0.8"/>
<path d="M386.8,336.89H408.5" stroke="#7a62f6" stroke-width="1.15"/>
<path d="M387,335.39l4.6,1.5" stroke="#3a3a48" stroke-width="0.7" opacity="0.85"/>
<path d="M395.9,335.89h6.2" stroke="#6a3a8a" stroke-width="0.9" stroke-dasharray="1.5 0.6" opacity="0.8"/>
<path d="M403.9,335.99h2.8" stroke="#a0602a" stroke-width="0.7" opacity="0.85"/>
<path d="M410.5,336.89h3.6" stroke="#4a8aa8" stroke-width="0.9" opacity="0.8"/>
<path d="M386.8,340.15H408.5" stroke="#7a62f6" stroke-width="1.15"/>
<path d="M387,338.65l4.6,1.5" stroke="#3a3a48" stroke-width="0.7" opacity="0.85"/>
<path d="M395.9,339.15h6.9" stroke="#80406a" stroke-width="0.9" stroke-dasharray="1.5 0.6" opacity="0.8"/>
<path d="M403.9,339.25h2.8" stroke="#a0602a" stroke-width="0.7" opacity="0.85"/>
<path d="M410.5,340.15h3.6" stroke="#4a8aa8" stroke-width="0.9" opacity="0.8"/>
<path d="M386.8,343.42H408.5" stroke="#7a62f6" stroke-width="1.15"/>
<path d="M387,341.92l4.6,1.5" stroke="#3a3a48" stroke-width="0.7" opacity="0.85"/>
<path d="M395.9,342.42h7.6" stroke="#3a5a8a" stroke-width="0.9" stroke-dasharray="1.5 0.6" opacity="0.8"/>
<path d="M403.9,342.52h2.8" stroke="#a0602a" stroke-width="0.7" opacity="0.85"/>
<path d="M410.5,343.42h3.6" stroke="#4a8aa8" stroke-width="0.9" opacity="0.8"/>
<path d="M386.8,346.68H408.5" stroke="#7a62f6" stroke-width="1.15"/>
<path d="M387,345.18l4.6,1.5" stroke="#3a3a48" stroke-width="0.7" opacity="0.85"/>
<path d="M395.9,345.68h6.2" stroke="#6a3a8a" stroke-width="0.9" stroke-dasharray="1.5 0.6" opacity="0.8"/>
<path d="M403.9,345.78h2.8" stroke="#a0602a" stroke-width="0.7" opacity="0.85"/>
<path d="M410.5,346.68h3.6" stroke="#4a8aa8" stroke-width="0.9" opacity="0.8"/>
<path d="M386.8,349.95H408.5" stroke="#7a62f6" stroke-width="1.15"/>
<path d="M387,348.45l4.6,1.5" stroke="#3a3a48" stroke-width="0.7" opacity="0.85"/>
<path d="M395.9,348.95h6.9" stroke="#80406a" stroke-width="0.9" stroke-dasharray="1.5 0.6" opacity="0.8"/>
<path d="M403.9,349.05h2.8" stroke="#a0602a" stroke-width="0.7" opacity="0.85"/>
<path d="M410.5,349.95h5.2" stroke="#4a8aa8" stroke-width="0.9" opacity="0.8"/>
<path d="M386.8,353.21H408.5" stroke="#7a62f6" stroke-width="1.15"/>
<path d="M387,351.71l4.6,1.5" stroke="#3a3a48" stroke-width="0.7" opacity="0.85"/>
<path d="M395.9,352.21h7.6" stroke="#3a5a8a" stroke-width="0.9" stroke-dasharray="1.5 0.6" opacity="0.8"/>
<path d="M403.9,352.31h2.8" stroke="#a0602a" stroke-width="0.7" opacity="0.85"/>
<path d="M410.5,353.21h5.2" stroke="#4a8aa8" stroke-width="0.9" opacity="0.8"/>
<path d="M386.8,356.48H408.5" stroke="#7a62f6" stroke-width="1.15"/>
<path d="M387,354.98l4.6,1.5" stroke="#3a3a48" stroke-width="0.7" opacity="0.85"/>
<path d="M395.9,355.48h6.2" stroke="#6a3a8a" stroke-width="0.9" stroke-dasharray="1.5 0.6" opacity="0.8"/>
<path d="M403.9,355.58h2.8" stroke="#a0602a" stroke-width="0.7" opacity="0.85"/>
<path d="M410.5,356.48h5.2" stroke="#4a8aa8" stroke-width="0.9" opacity="0.8"/>
<path d="M386.8,359.74H408.5" stroke="#7a62f6" stroke-width="1.15"/>
<path d="M387,358.24l4.6,1.5" stroke="#3a3a48" stroke-width="0.7" opacity="0.85"/>
<path d="M395.9,358.74h6.9" stroke="#80406a" stroke-width="0.9" stroke-dasharray="1.5 0.6" opacity="0.8"/>
<path d="M403.9,358.84h2.8" stroke="#a0602a" stroke-width="0.7" opacity="0.85"/>
<path d="M410.5,359.74h5.2" stroke="#4a8aa8" stroke-width="0.9" opacity="0.8"/>
<path d="M386.8,363.01H408.5" stroke="#7a62f6" stroke-width="1.15"/>
<path d="M387,361.51l4.6,1.5" stroke="#3a3a48" stroke-width="0.7" opacity="0.85"/>
<path d="M395.9,362.01h7.6" stroke="#3a5a8a" stroke-width="0.9" stroke-dasharray="1.5 0.6" opacity="0.8"/>
<path d="M403.9,362.11h2.8" stroke="#a0602a" stroke-width="0.7" opacity="0.85"/>
<path d="M410.5,363.01h5.2" stroke="#4a8aa8" stroke-width="0.9" opacity="0.8"/>
<path d="M386.8,366.27H408.5" stroke="#7a62f6" stroke-width="1.15"/>
<path d="M387,364.77l4.6,1.5" stroke="#3a3a48" stroke-width="0.7" opacity="0.85"/>
<path d="M395.9,365.27h6.2" stroke="#6a3a8a" stroke-width="0.9" stroke-dasharray="1.5 0.6" opacity="0.8"/>
<path d="M403.9,365.38h2.8" stroke="#a0602a" stroke-width="0.7" opacity="0.85"/>
<path d="M410.5,366.27h5.2" stroke="#4a8aa8" stroke-width="0.9" opacity="0.8"/>
<path d="M386.8,369.54H408.5" stroke="#7a62f6" stroke-width="1.15"/>
<path d="M387,368.04l4.6,1.5" stroke="#3a3a48" stroke-width="0.7" opacity="0.85"/>
<path d="M395.9,368.54h6.9" stroke="#80406a" stroke-width="0.9" stroke-dasharray="1.5 0.6" opacity="0.8"/>
<path d="M403.9,368.64h2.8" stroke="#a0602a" stroke-width="0.7" opacity="0.85"/>
<path d="M410.5,369.54h5.2" stroke="#4a8aa8" stroke-width="0.9" opacity="0.8"/>
<path d="M386.8,372.8H408.5" stroke="#7a62f6" stroke-width="1.15"/>
<path d="M387,371.3l4.6,1.5" stroke="#3a3a48" stroke-width="0.7" opacity="0.85"/>
<path d="M395.9,371.8h7.6" stroke="#3a5a8a" stroke-width="0.9" stroke-dasharray="1.5 0.6" opacity="0.8"/>
<path d="M403.9,371.9h2.8" stroke="#a0602a" stroke-width="0.7" opacity="0.85"/>
<path d="M410.5,372.8h5.2" stroke="#4a8aa8" stroke-width="0.9" opacity="0.8"/>
<rect x="408.7" y="310.8" width="27.2" height="78.5" fill="none" stroke="#444" stroke-width="0.85"/>
<path d="M435.9,316.7h3.2l1.4,-1.2" stroke="#444" stroke-width="0.55" fill="none"/>
<path d="M429.7,316.7h1.4" stroke="#d08a28" stroke-width="0.9" opacity="0.8"/><path d="M431.1,316.7h2.6" stroke="#4a68b8" stroke-width="0.9" opacity="0.8"/>
<path d="M435.9,319.5h3.2l1.4,-1.2" stroke="#444" stroke-width="0.55" fill="none"/>
<path d="M429.7,319.5h1.4" stroke="#d08a28" stroke-width="0.9" opacity="0.8"/><path d="M431.1,319.5h2.6" stroke="#4a68b8" stroke-width="0.9" opacity="0.8"/>
<path d="M435.9,322.9h3.2l1.4,-1.2" stroke="#444" stroke-width="0.55" fill="none"/>
<path d="M429.7,322.9h1.4" stroke="#d08a28" stroke-width="0.9" opacity="0.8"/><path d="M431.1,322.9h2.6" stroke="#4a68b8" stroke-width="0.9" opacity="0.8"/>
<path d="M435.9,339.3H459.2l1.4,-1.3" stroke="#7a62f6" stroke-width="1.1" fill="none"/>
<path d="M441.9,338h6.5" stroke="#b03a6a" stroke-width="0.8" stroke-dasharray="1.6 0.6" opacity="0.8"/>
<path d="M438.5,338.4h2M455.2,339.1l4.2,-1.5" stroke="#3a3a48" stroke-width="0.7" fill="none"/>
<path d="M428.7,339.3h2.2" stroke="#d08a28" stroke-width="0.9"/><path d="M430.9,339.3h2.6" stroke="#3a58c0" stroke-width="0.9"/>
<path d="M435.9,345.8H459.2l1.4,-1.3" stroke="#7a62f6" stroke-width="1.1" fill="none"/>
<path d="M441.9,344.5h6.5" stroke="#b03a6a" stroke-width="0.8" stroke-dasharray="1.6 0.6" opacity="0.8"/>
<path d="M438.5,344.9h2M455.2,345.6l4.2,-1.5" stroke="#3a3a48" stroke-width="0.7" fill="none"/>
<path d="M428.7,345.8h2.2" stroke="#d08a28" stroke-width="0.9"/><path d="M430.9,345.8h2.6" stroke="#3a58c0" stroke-width="0.9"/>
<path d="M435.9,352.3H459.2l1.4,-1.3" stroke="#7a62f6" stroke-width="1.1" fill="none"/>
<path d="M441.9,351h6.5" stroke="#b03a6a" stroke-width="0.8" stroke-dasharray="1.6 0.6" opacity="0.8"/>
<path d="M438.5,351.4h2M455.2,352.1l4.2,-1.5" stroke="#3a3a48" stroke-width="0.7" fill="none"/>
<path d="M428.7,352.3h2.2" stroke="#d08a28" stroke-width="0.9"/><path d="M430.9,352.3h2.6" stroke="#3a58c0" stroke-width="0.9"/>
<path d="M435.9,358.8H459.2l1.4,-1.3" stroke="#7a62f6" stroke-width="1.1" fill="none"/>
<path d="M441.9,357.5h6.5" stroke="#b03a6a" stroke-width="0.8" stroke-dasharray="1.6 0.6" opacity="0.8"/>
<path d="M438.5,357.9h2M455.2,358.6l4.2,-1.5" stroke="#3a3a48" stroke-width="0.7" fill="none"/>
<path d="M428.7,358.8h2.2" stroke="#d08a28" stroke-width="0.9"/><path d="M430.9,358.8h2.6" stroke="#3a58c0" stroke-width="0.9"/>
<circle cx="407.1" cy="379.3" r="1.35" fill="#fff" stroke="#222" stroke-width="0.6"/>
<path d="M410.5,379.6l2.4,-1.3" stroke="#444" stroke-width="0.6"/>
<circle cx="407.1" cy="382.5" r="1.35" fill="#fff" stroke="#222" stroke-width="0.6"/>
<path d="M410.5,382.8l2.4,-1.3" stroke="#444" stroke-width="0.6"/>
<circle cx="407.1" cy="385.6" r="1.35" fill="#fff" stroke="#222" stroke-width="0.6"/>
<path d="M410.5,385.9l2.4,-1.3" stroke="#444" stroke-width="0.6"/>
<text x="422.2" y="308.9" font-size="3.3" font-weight="bold" text-anchor="middle" fill="#422">U2</text>
<text x="422.2" y="313.9" font-size="2.4" font-weight="bold" text-anchor="middle" fill="#4a5aa0">SRAM256K</text>
<text x="422.2" y="387.9" font-size="2.4" font-weight="bold" text-anchor="middle" fill="#4a68b8">GND</text>
<path d="M405.7,385.6H398.8" stroke="#7a62f6" stroke-width="0.9" fill="none"/>
<path d="M398.8,385.6V392" stroke="#e09a28" stroke-width="0.9" fill="none"/>
<path d="M395,391.9h7.6l-3.8,4.4z" fill="#666"/>
<path d="M567.2,209.7H589.6" stroke="#7a62f6" stroke-width="1.15"/>
<path d="M567.4,208.2l4.6,1.5" stroke="#3a3a48" stroke-width="0.7" opacity="0.85"/>
<path d="M576.3,208.7h6.2" stroke="#6a3a8a" stroke-width="0.9" stroke-dasharray="1.5 0.6" opacity="0.8"/>
<path d="M585,208.8h2.8" stroke="#a0602a" stroke-width="0.7" opacity="0.85"/>
<path d="M591.6,209.7h3.6" stroke="#4a8aa8" stroke-width="0.9" opacity="0.8"/>
<path d="M567.2,212.97H589.6" stroke="#7a62f6" stroke-width="1.15"/>
<path d="M567.4,211.47l4.6,1.5" stroke="#3a3a48" stroke-width="0.7" opacity="0.85"/>
<path d="M576.3,211.97h6.9" stroke="#80406a" stroke-width="0.9" stroke-dasharray="1.5 0.6" opacity="0.8"/>
<path d="M585,212.06h2.8" stroke="#a0602a" stroke-width="0.7" opacity="0.85"/>
<path d="M591.6,212.97h3.6" stroke="#4a8aa8" stroke-width="0.9" opacity="0.8"/>
<path d="M567.2,216.23H589.6" stroke="#7a62f6" stroke-width="1.15"/>
<path d="M567.4,214.73l4.6,1.5" stroke="#3a3a48" stroke-width="0.7" opacity="0.85"/>
<path d="M576.3,215.23h7.6" stroke="#3a5a8a" stroke-width="0.9" stroke-dasharray="1.5 0.6" opacity="0.8"/>
<path d="M585,215.33h2.8" stroke="#a0602a" stroke-width="0.7" opacity="0.85"/>
<path d="M591.6,216.23h3.6" stroke="#4a8aa8" stroke-width="0.9" opacity="0.8"/>
<path d="M567.2,219.5H589.6" stroke="#7a62f6" stroke-width="1.15"/>
<path d="M567.4,218l4.6,1.5" stroke="#3a3a48" stroke-width="0.7" opacity="0.85"/>
<path d="M576.3,218.5h6.2" stroke="#6a3a8a" stroke-width="0.9" stroke-dasharray="1.5 0.6" opacity="0.8"/>
<path d="M585,218.59h2.8" stroke="#a0602a" stroke-width="0.7" opacity="0.85"/>
<path d="M591.6,219.5h3.6" stroke="#4a8aa8" stroke-width="0.9" opacity="0.8"/>
<path d="M567.2,222.76H589.6" stroke="#7a62f6" stroke-width="1.15"/>
<path d="M567.4,221.26l4.6,1.5" stroke="#3a3a48" stroke-width="0.7" opacity="0.85"/>
<path d="M576.3,221.76h6.9" stroke="#80406a" stroke-width="0.9" stroke-dasharray="1.5 0.6" opacity="0.8"/>
<path d="M585,221.86h2.8" stroke="#a0602a" stroke-width="0.7" opacity="0.85"/>
<path d="M591.6,222.76h3.6" stroke="#4a8aa8" stroke-width="0.9" opacity="0.8"/>
<path d="M567.2,226.03H589.6" stroke="#7a62f6" stroke-width="1.15"/>
<path d="M567.4,224.53l4.6,1.5" stroke="#3a3a48" stroke-width="0.7" opacity="0.85"/>
<path d="M576.3,225.03h7.6" stroke="#3a5a8a" stroke-width="0.9" stroke-dasharray="1.5 0.6" opacity="0.8"/>
<path d="M585,225.12h2.8" stroke="#a0602a" stroke-width="0.7" opacity="0.85"/>
<path d="M591.6,226.03h3.6" stroke="#4a8aa8" stroke-width="0.9" opacity="0.8"/>
<path d="M567.2,229.29H589.6" stroke="#7a62f6" stroke-width="1.15"/>
<path d="M567.4,227.79l4.6,1.5" stroke="#3a3a48" stroke-width="0.7" opacity="0.85"/>
<path d="M576.3,228.29h6.2" stroke="#6a3a8a" stroke-width="0.9" stroke-dasharray="1.5 0.6" opacity="0.8"/>
<path d="M585,228.39h2.8" stroke="#a0602a" stroke-width="0.7" opacity="0.85"/>
<path d="M591.6,229.29h3.6" stroke="#4a8aa8" stroke-width="0.9" opacity="0.8"/>
<path d="M567.2,232.56H589.6" stroke="#7a62f6" stroke-width="1.15"/>
<path d="M567.4,231.06l4.6,1.5" stroke="#3a3a48" stroke-width="0.7" opacity="0.85"/>
<path d="M576.3,231.56h6.9" stroke="#80406a" stroke-width="0.9" stroke-dasharray="1.5 0.6" opacity="0.8"/>
<path d="M585,231.66h2.8" stroke="#a0602a" stroke-width="0.7" opacity="0.85"/>
<path d="M591.6,232.56h3.6" stroke="#4a8aa8" stroke-width="0.9" opacity="0.8"/>
<path d="M567.2,235.82H589.6" stroke="#7a62f6" stroke-width="1.15"/>
<path d="M567.4,234.32l4.6,1.5" stroke="#3a3a48" stroke-width="0.7" opacity="0.85"/>
<path d="M576.3,234.82h7.6" stroke="#3a5a8a" stroke-width="0.9" stroke-dasharray="1.5 0.6" opacity="0.8"/>
<path d="M585,234.92h2.8" stroke="#a0602a" stroke-width="0.7" opacity="0.85"/>
<path d="M591.6,235.82h3.6" stroke="#4a8aa8" stroke-width="0.9" opacity="0.8"/>
<path d="M567.2,239.09H589.6" stroke="#7a62f6" stroke-width="1.15"/>
<path d="M567.4,237.59l4.6,1.5" stroke="#3a3a48" stroke-width="0.7" opacity="0.85"/>
<path d="M576.3,238.09h6.2" stroke="#6a3a8a" stroke-width="0.9" stroke-dasharray="1.5 0.6" opacity="0.8"/>
<path d="M585,238.19h2.8" stroke="#a0602a" stroke-width="0.7" opacity="0.85"/>
<path d="M591.6,239.09h3.6" stroke="#4a8aa8" stroke-width="0.9" opacity="0.8"/>
<path d="M567.2,242.35H589.6" stroke="#7a62f6" stroke-width="1.15"/>
<path d="M567.4,240.85l4.6,1.5" stroke="#3a3a48" stroke-width="0.7" opacity="0.85"/>
<path d="M576.3,241.35h6.9" stroke="#80406a" stroke-width="0.9" stroke-dasharray="1.5 0.6" opacity="0.8"/>
<path d="M585,241.45h2.8" stroke="#a0602a" stroke-width="0.7" opacity="0.85"/>
<path d="M591.6,242.35h5.2" stroke="#4a8aa8" stroke-width="0.9" opacity="0.8"/>
<path d="M567.2,245.62H589.6" stroke="#7a62f6" stroke-width="1.15"/>
<path d="M567.4,244.12l4.6,1.5" stroke="#3a3a48" stroke-width="0.7" opacity="0.85"/>
<path d="M576.3,244.62h7.6" stroke="#3a5a8a" stroke-width="0.9" stroke-dasharray="1.5 0.6" opacity="0.8"/>
<path d="M585,244.72h2.8" stroke="#a0602a" stroke-width="0.7" opacity="0.85"/>
<path d="M591.6,245.62h5.2" stroke="#4a8aa8" stroke-width="0.9" opacity="0.8"/>
<path d="M567.2,248.88H589.6" stroke="#7a62f6" stroke-width="1.15"/>
<path d="M567.4,247.38l4.6,1.5" stroke="#3a3a48" stroke-width="0.7" opacity="0.85"/>
<path d="M576.3,247.88h6.2" stroke="#6a3a8a" stroke-width="0.9" stroke-dasharray="1.5 0.6" opacity="0.8"/>
<path d="M585,247.98h2.8" stroke="#a0602a" stroke-width="0.7" opacity="0.85"/>
<path d="M591.6,248.88h5.2" stroke="#4a8aa8" stroke-width="0.9" opacity="0.8"/>
<path d="M567.2,252.15H589.6" stroke="#7a62f6" stroke-width="1.15"/>
<path d="M567.4,250.65l4.6,1.5" stroke="#3a3a48" stroke-width="0.7" opacity="0.85"/>
<path d="M576.3,251.15h6.9" stroke="#80406a" stroke-width="0.9" stroke-dasharray="1.5 0.6" opacity="0.8"/>
<path d="M585,251.25h2.8" stroke="#a0602a" stroke-width="0.7" opacity="0.85"/>
<path d="M591.6,252.15h5.2" stroke="#4a8aa8" stroke-width="0.9" opacity="0.8"/>
<path d="M567.2,255.41H589.6" stroke="#7a62f6" stroke-width="1.15"/>
<path d="M567.4,253.91l4.6,1.5" stroke="#3a3a48" stroke-width="0.7" opacity="0.85"/>
<path d="M576.3,254.41h7.6" stroke="#3a5a8a" stroke-width="0.9" stroke-dasharray="1.5 0.6" opacity="0.8"/>
<path d="M585,254.51h2.8" stroke="#a0602a" stroke-width="0.7" opacity="0.85"/>
<path d="M591.6,255.41h5.2" stroke="#4a8aa8" stroke-width="0.9" opacity="0.8"/>
<path d="M567.2,258.68H589.6" stroke="#7a62f6" stroke-width="1.15"/>
<path d="M567.4,257.18l4.6,1.5" stroke="#3a3a48" stroke-width="0.7" opacity="0.85"/>
<path d="M576.3,257.68h6.2" stroke="#6a3a8a" stroke-width="0.9" stroke-dasharray="1.5 0.6" opacity="0.8"/>
<path d="M585,257.78h2.8" stroke="#a0602a" stroke-width="0.7" opacity="0.85"/>
<path d="M591.6,258.68h5.2" stroke="#4a8aa8" stroke-width="0.9" opacity="0.8"/>
<path d="M567.2,261.94H589.6" stroke="#7a62f6" stroke-width="1.15"/>
<path d="M567.4,260.44l4.6,1.5" stroke="#3a3a48" stroke-width="0.7" opacity="0.85"/>
<path d="M576.3,260.94h6.9" stroke="#80406a" stroke-width="0.9" stroke-dasharray="1.5 0.6" opacity="0.8"/>
<path d="M585,261.04h2.8" stroke="#a0602a" stroke-width="0.7" opacity="0.85"/>
<path d="M591.6,261.94h5.2" stroke="#4a8aa8" stroke-width="0.9" opacity="0.8"/>
<path d="M567.2,265.21H589.6" stroke="#7a62f6" stroke-width="1.15"/>
<path d="M567.4,263.71l4.6,1.5" stroke="#3a3a48" stroke-width="0.7" opacity="0.85"/>
<path d="M576.3,264.21h7.6" stroke="#3a5a8a" stroke-width="0.9" stroke-dasharray="1.5 0.6" opacity="0.8"/>
<path d="M585,264.31h2.8" stroke="#a0602a" stroke-width="0.7" opacity="0.85"/>
<path d="M591.6,265.21h5.2" stroke="#4a8aa8" stroke-width="0.9" opacity="0.8"/>
<rect x="589.8" y="203.2" width="27.2" height="78.2" fill="none" stroke="#444" stroke-width="0.85"/>
<path d="M617,209.1h3.2l1.4,-1.2" stroke="#444" stroke-width="0.55" fill="none"/>
<path d="M610.8,209.1h1.4" stroke="#d08a28" stroke-width="0.9" opacity="0.8"/><path d="M612.2,209.1h2.6" stroke="#4a68b8" stroke-width="0.9" opacity="0.8"/>
<path d="M617,211.9h3.2l1.4,-1.2" stroke="#444" stroke-width="0.55" fill="none"/>
<path d="M610.8,211.9h1.4" stroke="#d08a28" stroke-width="0.9" opacity="0.8"/><path d="M612.2,211.9h2.6" stroke="#4a68b8" stroke-width="0.9" opacity="0.8"/>
<path d="M617,215.3h3.2l1.4,-1.2" stroke="#444" stroke-width="0.55" fill="none"/>
<path d="M610.8,215.3h1.4" stroke="#d08a28" stroke-width="0.9" opacity="0.8"/><path d="M612.2,215.3h2.6" stroke="#4a68b8" stroke-width="0.9" opacity="0.8"/>
<path d="M617,231.7H638.8l1.4,-1.3" stroke="#7a62f6" stroke-width="1.1" fill="none"/>
<path d="M623,230.4h6.5" stroke="#b03a6a" stroke-width="0.8" stroke-dasharray="1.6 0.6" opacity="0.8"/>
<path d="M619.6,230.8h2M634.8,231.5l4.2,-1.5" stroke="#3a3a48" stroke-width="0.7" fill="none"/>
<path d="M609.8,231.7h2.2" stroke="#d08a28" stroke-width="0.9"/><path d="M612,231.7h2.6" stroke="#3a58c0" stroke-width="0.9"/>
<path d="M617,238.2H638.8l1.4,-1.3" stroke="#7a62f6" stroke-width="1.1" fill="none"/>
<path d="M623,236.9h6.5" stroke="#b03a6a" stroke-width="0.8" stroke-dasharray="1.6 0.6" opacity="0.8"/>
<path d="M619.6,237.3h2M634.8,238l4.2,-1.5" stroke="#3a3a48" stroke-width="0.7" fill="none"/>
<path d="M609.8,238.2h2.2" stroke="#d08a28" stroke-width="0.9"/><path d="M612,238.2h2.6" stroke="#3a58c0" stroke-width="0.9"/>
<path d="M617,244.7H638.8l1.4,-1.3" stroke="#7a62f6" stroke-width="1.1" fill="none"/>
<path d="M623,243.4h6.5" stroke="#b03a6a" stroke-width="0.8" stroke-dasharray="1.6 0.6" opacity="0.8"/>
<path d="M619.6,243.8h2M634.8,244.5l4.2,-1.5" stroke="#3a3a48" stroke-width="0.7" fill="none"/>
<path d="M609.8,244.7h2.2" stroke="#d08a28" stroke-width="0.9"/><path d="M612,244.7h2.6" stroke="#3a58c0" stroke-width="0.9"/>
<path d="M617,251.2H638.8l1.4,-1.3" stroke="#7a62f6" stroke-width="1.1" fill="none"/>
<path d="M623,249.9h6.5" stroke="#b03a6a" stroke-width="0.8" stroke-dasharray="1.6 0.6" opacity="0.8"/>
<path d="M619.6,250.3h2M634.8,251l4.2,-1.5" stroke="#3a3a48" stroke-width="0.7" fill="none"/>
<path d="M609.8,251.2h2.2" stroke="#d08a28" stroke-width="0.9"/><path d="M612,251.2h2.6" stroke="#3a58c0" stroke-width="0.9"/>
<circle cx="588.2" cy="271.7" r="1.35" fill="#fff" stroke="#222" stroke-width="0.6"/>
<path d="M591.6,272l2.4,-1.3" stroke="#444" stroke-width="0.6"/>
<circle cx="588.2" cy="274.9" r="1.35" fill="#fff" stroke="#222" stroke-width="0.6"/>
<path d="M591.6,275.2l2.4,-1.3" stroke="#444" stroke-width="0.6"/>
<circle cx="588.2" cy="278" r="1.35" fill="#fff" stroke="#222" stroke-width="0.6"/>
<path d="M591.6,278.3l2.4,-1.3" stroke="#444" stroke-width="0.6"/>
<text x="603.3" y="201.3" font-size="3.3" font-weight="bold" text-anchor="middle" fill="#422">U3</text>
<text x="603.3" y="206.3" font-size="2.4" font-weight="bold" text-anchor="middle" fill="#4a5aa0">SRAM256K</text>
<text x="603.3" y="280" font-size="2.4" font-weight="bold" text-anchor="middle" fill="#4a68b8">GND</text>
<path d="M586.8,278H580.3" stroke="#7a62f6" stroke-width="0.9" fill="none"/>
<path d="M580.3,278V284.1" stroke="#e09a28" stroke-width="0.9" fill="none"/>
<path d="M576.5,284h7.6l-3.8,4.4z" fill="#666"/>
<path d="M567.2,317.3H588.2" stroke="#7a62f6" stroke-width="1.15"/>
<path d="M567.4,315.8l4.6,1.5" stroke="#3a3a48" stroke-width="0.7" opacity="0.85"/>
<path d="M576.3,316.3h6.2" stroke="#6a3a8a" stroke-width="0.9" stroke-dasharray="1.5 0.6" opacity="0.8"/>
<path d="M583.6,316.4h2.8" stroke="#a0602a" stroke-width="0.7" opacity="0.85"/>
<path d="M590.2,317.3h3.6" stroke="#4a8aa8" stroke-width="0.9" opacity="0.8"/>
<path d="M567.2,320.56H588.2" stroke="#7a62f6" stroke-width="1.15"/>
<path d="M567.4,319.06l4.6,1.5" stroke="#3a3a48" stroke-width="0.7" opacity="0.85"/>
<path d="M576.3,319.56h6.9" stroke="#80406a" stroke-width="0.9" stroke-dasharray="1.5 0.6" opacity="0.8"/>
<path d="M583.6,319.66h2.8" stroke="#a0602a" stroke-width="0.7" opacity="0.85"/>
<path d="M590.2,320.56h3.6" stroke="#4a8aa8" stroke-width="0.9" opacity="0.8"/>
<path d="M567.2,323.83H588.2" stroke="#7a62f6" stroke-width="1.15"/>
<path d="M567.4,322.33l4.6,1.5" stroke="#3a3a48" stroke-width="0.7" opacity="0.85"/>
<path d="M576.3,322.83h7.6" stroke="#3a5a8a" stroke-width="0.9" stroke-dasharray="1.5 0.6" opacity="0.8"/>
<path d="M583.6,322.93h2.8" stroke="#a0602a" stroke-width="0.7" opacity="0.85"/>
<path d="M590.2,323.83h3.6" stroke="#4a8aa8" stroke-width="0.9" opacity="0.8"/>
<path d="M567.2,327.09H588.2" stroke="#7a62f6" stroke-width="1.15"/>
<path d="M567.4,325.59l4.6,1.5" stroke="#3a3a48" stroke-width="0.7" opacity="0.85"/>
<path d="M576.3,326.09h6.2" stroke="#6a3a8a" stroke-width="0.9" stroke-dasharray="1.5 0.6" opacity="0.8"/>
<path d="M583.6,326.19h2.8" stroke="#a0602a" stroke-width="0.7" opacity="0.85"/>
<path d="M590.2,327.09h3.6" stroke="#4a8aa8" stroke-width="0.9" opacity="0.8"/>
<path d="M567.2,330.36H588.2" stroke="#7a62f6" stroke-width="1.15"/>
<path d="M567.4,328.86l4.6,1.5" stroke="#3a3a48" stroke-width="0.7" opacity="0.85"/>
<path d="M576.3,329.36h6.9" stroke="#80406a" stroke-width="0.9" stroke-dasharray="1.5 0.6" opacity="0.8"/>
<path d="M583.6,329.46h2.8" stroke="#a0602a" stroke-width="0.7" opacity="0.85"/>
<path d="M590.2,330.36h3.6" stroke="#4a8aa8" stroke-width="0.9" opacity="0.8"/>
<path d="M567.2,333.62H588.2" stroke="#7a62f6" stroke-width="1.15"/>
<path d="M567.4,332.12l4.6,1.5" stroke="#3a3a48" stroke-width="0.7" opacity="0.85"/>
<path d="M576.3,332.62h7.6" stroke="#3a5a8a" stroke-width="0.9" stroke-dasharray="1.5 0.6" opacity="0.8"/>
<path d="M583.6,332.72h2.8" stroke="#a0602a" stroke-width="0.7" opacity="0.85"/>
<path d="M590.2,333.62h3.6" stroke="#4a8aa8" stroke-width="0.9" opacity="0.8"/>
<path d="M567.2,336.89H588.2" stroke="#7a62f6" stroke-width="1.15"/>
<path d="M567.4,335.39l4.6,1.5" stroke="#3a3a48" stroke-width="0.7" opacity="0.85"/>
<path d="M576.3,335.89h6.2" stroke="#6a3a8a" stroke-width="0.9" stroke-dasharray="1.5 0.6" opacity="0.8"/>
<path d="M583.6,335.99h2.8" stroke="#a0602a" stroke-width="0.7" opacity="0.85"/>
<path d="M590.2,336.89h3.6" stroke="#4a8aa8" stroke-width="0.9" opacity="0.8"/>
<path d="M567.2,340.15H588.2" stroke="#7a62f6" stroke-width="1.15"/>
<path d="M567.4,338.65l4.6,1.5" stroke="#3a3a48" stroke-width="0.7" opacity="0.85"/>
<path d="M576.3,339.15h6.9" stroke="#80406a" stroke-width="0.9" stroke-dasharray="1.5 0.6" opacity="0.8"/>
<path d="M583.6,339.25h2.8" stroke="#a0602a" stroke-width="0.7" opacity="0.85"/>
<path d="M590.2,340.15h3.6" stroke="#4a8aa8" stroke-width="0.9" opacity="0.8"/>
<path d="M567.2,343.42H588.2" stroke="#7a62f6" stroke-width="1.15"/>
<path d="M567.4,341.92l4.6,1.5" stroke="#3a3a48" stroke-width="0.7" opacity="0.85"/>
<path d="M576.3,342.42h7.6" stroke="#3a5a8a" stroke-width="0.9" stroke-dasharray="1.5 0.6" opacity="0.8"/>
<path d="M583.6,342.52h2.8" stroke="#a0602a" stroke-width="0.7" opacity="0.85"/>
<path d="M590.2,343.42h3.6" stroke="#4a8aa8" stroke-width="0.9" opacity="0.8"/>
<path d="M567.2,346.68H588.2" stroke="#7a62f6" stroke-width="1.15"/>
<path d="M567.4,345.18l4.6,1.5" stroke="#3a3a48" stroke-width="0.7" opacity="0.85"/>
<path d="M576.3,345.68h6.2" stroke="#6a3a8a" stroke-width="0.9" stroke-dasharray="1.5 0.6" opacity="0.8"/>
<path d="M583.6,345.78h2.8" stroke="#a0602a" stroke-width="0.7" opacity="0.85"/>
<path d="M590.2,346.68h3.6" stroke="#4a8aa8" stroke-width="0.9" opacity="0.8"/>
<path d="M567.2,349.95H588.2" stroke="#7a62f6" stroke-width="1.15"/>
<path d="M567.4,348.45l4.6,1.5" stroke="#3a3a48" stroke-width="0.7" opacity="0.85"/>
<path d="M576.3,348.95h6.9" stroke="#80406a" stroke-width="0.9" stroke-dasharray="1.5 0.6" opacity="0.8"/>
<path d="M583.6,349.05h2.8" stroke="#a0602a" stroke-width="0.7" opacity="0.85"/>
<path d="M590.2,349.95h5.2" stroke="#4a8aa8" stroke-width="0.9" opacity="0.8"/>
<path d="M567.2,353.21H588.2" stroke="#7a62f6" stroke-width="1.15"/>
<path d="M567.4,351.71l4.6,1.5" stroke="#3a3a48" stroke-width="0.7" opacity="0.85"/>
<path d="M576.3,352.21h7.6" stroke="#3a5a8a" stroke-width="0.9" stroke-dasharray="1.5 0.6" opacity="0.8"/>
<path d="M583.6,352.31h2.8" stroke="#a0602a" stroke-width="0.7" opacity="0.85"/>
<path d="M590.2,353.21h5.2" stroke="#4a8aa8" stroke-width="0.9" opacity="0.8"/>
<path d="M567.2,356.48H588.2" stroke="#7a62f6" stroke-width="1.15"/>
<path d="M567.4,354.98l4.6,1.5" stroke="#3a3a48" stroke-width="0.7" opacity="0.85"/>
<path d="M576.3,355.48h6.2" stroke="#6a3a8a" stroke-width="0.9" stroke-dasharray="1.5 0.6" opacity="0.8"/>
<path d="M583.6,355.58h2.8" stroke="#a0602a" stroke-width="0.7" opacity="0.85"/>
<path d="M590.2,356.48h5.2" stroke="#4a8aa8" stroke-width="0.9" opacity="0.8"/>
<path d="M567.2,359.74H588.2" stroke="#7a62f6" stroke-width="1.15"/>
<path d="M567.4,358.24l4.6,1.5" stroke="#3a3a48" stroke-width="0.7" opacity="0.85"/>
<path d="M576.3,358.74h6.9" stroke="#80406a" stroke-width="0.9" stroke-dasharray="1.5 0.6" opacity="0.8"/>
<path d="M583.6,358.84h2.8" stroke="#a0602a" stroke-width="0.7" opacity="0.85"/>
<path d="M590.2,359.74h5.2" stroke="#4a8aa8" stroke-width="0.9" opacity="0.8"/>
<path d="M567.2,363.01H588.2" stroke="#7a62f6" stroke-width="1.15"/>
<path d="M567.4,361.51l4.6,1.5" stroke="#3a3a48" stroke-width="0.7" opacity="0.85"/>
<path d="M576.3,362.01h7.6" stroke="#3a5a8a" stroke-width="0.9" stroke-dasharray="1.5 0.6" opacity="0.8"/>
<path d="M583.6,362.11h2.8" stroke="#a0602a" stroke-width="0.7" opacity="0.85"/>
<path d="M590.2,363.01h5.2" stroke="#4a8aa8" stroke-width="0.9" opacity="0.8"/>
<path d="M567.2,366.27H588.2" stroke="#7a62f6" stroke-width="1.15"/>
<path d="M567.4,364.77l4.6,1.5" stroke="#3a3a48" stroke-width="0.7" opacity="0.85"/>
<path d="M576.3,365.27h6.2" stroke="#6a3a8a" stroke-width="0.9" stroke-dasharray="1.5 0.6" opacity="0.8"/>
<path d="M583.6,365.38h2.8" stroke="#a0602a" stroke-width="0.7" opacity="0.85"/>
<path d="M590.2,366.27h5.2" stroke="#4a8aa8" stroke-width="0.9" opacity="0.8"/>
<path d="M567.2,369.54H588.2" stroke="#7a62f6" stroke-width="1.15"/>
<path d="M567.4,368.04l4.6,1.5" stroke="#3a3a48" stroke-width="0.7" opacity="0.85"/>
<path d="M576.3,368.54h6.9" stroke="#80406a" stroke-width="0.9" stroke-dasharray="1.5 0.6" opacity="0.8"/>
<path d="M583.6,368.64h2.8" stroke="#a0602a" stroke-width="0.7" opacity="0.85"/>
<path d="M590.2,369.54h5.2" stroke="#4a8aa8" stroke-width="0.9" opacity="0.8"/>
<path d="M567.2,372.8H588.2" stroke="#7a62f6" stroke-width="1.15"/>
<path d="M567.4,371.3l4.6,1.5" stroke="#3a3a48" stroke-width="0.7" opacity="0.85"/>
<path d="M576.3,371.8h7.6" stroke="#3a5a8a" stroke-width="0.9" stroke-dasharray="1.5 0.6" opacity="0.8"/>
<path d="M583.6,371.9h2.8" stroke="#a0602a" stroke-width="0.7" opacity="0.85"/>
<path d="M590.2,372.8h5.2" stroke="#4a8aa8" stroke-width="0.9" opacity="0.8"/>
<rect x="588.4" y="310.8" width="26.4" height="78.5" fill="none" stroke="#444" stroke-width="0.85"/>
<path d="M614.8,316.7h3.2l1.4,-1.2" stroke="#444" stroke-width="0.55" fill="none"/>
<path d="M608.6,316.7h1.4" stroke="#d08a28" stroke-width="0.9" opacity="0.8"/><path d="M610,316.7h2.6" stroke="#4a68b8" stroke-width="0.9" opacity="0.8"/>
<path d="M614.8,319.5h3.2l1.4,-1.2" stroke="#444" stroke-width="0.55" fill="none"/>
<path d="M608.6,319.5h1.4" stroke="#d08a28" stroke-width="0.9" opacity="0.8"/><path d="M610,319.5h2.6" stroke="#4a68b8" stroke-width="0.9" opacity="0.8"/>
<path d="M614.8,322.9h3.2l1.4,-1.2" stroke="#444" stroke-width="0.55" fill="none"/>
<path d="M608.6,322.9h1.4" stroke="#d08a28" stroke-width="0.9" opacity="0.8"/><path d="M610,322.9h2.6" stroke="#4a68b8" stroke-width="0.9" opacity="0.8"/>
<path d="M614.8,339.3H638.8l1.4,-1.3" stroke="#7a62f6" stroke-width="1.1" fill="none"/>
<path d="M620.8,338h6.5" stroke="#b03a6a" stroke-width="0.8" stroke-dasharray="1.6 0.6" opacity="0.8"/>
<path d="M617.4,338.4h2M634.8,339.1l4.2,-1.5" stroke="#3a3a48" stroke-width="0.7" fill="none"/>
<path d="M607.6,339.3h2.2" stroke="#d08a28" stroke-width="0.9"/><path d="M609.8,339.3h2.6" stroke="#3a58c0" stroke-width="0.9"/>
<path d="M614.8,345.8H638.8l1.4,-1.3" stroke="#7a62f6" stroke-width="1.1" fill="none"/>
<path d="M620.8,344.5h6.5" stroke="#b03a6a" stroke-width="0.8" stroke-dasharray="1.6 0.6" opacity="0.8"/>
<path d="M617.4,344.9h2M634.8,345.6l4.2,-1.5" stroke="#3a3a48" stroke-width="0.7" fill="none"/>
<path d="M607.6,345.8h2.2" stroke="#d08a28" stroke-width="0.9"/><path d="M609.8,345.8h2.6" stroke="#3a58c0" stroke-width="0.9"/>
<path d="M614.8,352.3H638.8l1.4,-1.3" stroke="#7a62f6" stroke-width="1.1" fill="none"/>
<path d="M620.8,351h6.5" stroke="#b03a6a" stroke-width="0.8" stroke-dasharray="1.6 0.6" opacity="0.8"/>
<path d="M617.4,351.4h2M634.8,352.1l4.2,-1.5" stroke="#3a3a48" stroke-width="0.7" fill="none"/>
<path d="M607.6,352.3h2.2" stroke="#d08a28" stroke-width="0.9"/><path d="M609.8,352.3h2.6" stroke="#3a58c0" stroke-width="0.9"/>
<path d="M614.8,358.8H638.8l1.4,-1.3" stroke="#7a62f6" stroke-width="1.1" fill="none"/>
<path d="M620.8,357.5h6.5" stroke="#b03a6a" stroke-width="0.8" stroke-dasharray="1.6 0.6" opacity="0.8"/>
<path d="M617.4,357.9h2M634.8,358.6l4.2,-1.5" stroke="#3a3a48" stroke-width="0.7" fill="none"/>
<path d="M607.6,358.8h2.2" stroke="#d08a28" stroke-width="0.9"/><path d="M609.8,358.8h2.6" stroke="#3a58c0" stroke-width="0.9"/>
<circle cx="586.8" cy="379.3" r="1.35" fill="#fff" stroke="#222" stroke-width="0.6"/>
<path d="M590.2,379.6l2.4,-1.3" stroke="#444" stroke-width="0.6"/>
<circle cx="586.8" cy="382.5" r="1.35" fill="#fff" stroke="#222" stroke-width="0.6"/>
<path d="M590.2,382.8l2.4,-1.3" stroke="#444" stroke-width="0.6"/>
<circle cx="586.8" cy="385.6" r="1.35" fill="#fff" stroke="#222" stroke-width="0.6"/>
<path d="M590.2,385.9l2.4,-1.3" stroke="#444" stroke-width="0.6"/>
<text x="601.5" y="308.9" font-size="3.3" font-weight="bold" text-anchor="middle" fill="#422">U4</text>
<text x="601.5" y="313.9" font-size="2.4" font-weight="bold" text-anchor="middle" fill="#4a5aa0">SRAM256K</text>
<text x="601.5" y="387.9" font-size="2.4" font-weight="bold" text-anchor="middle" fill="#4a68b8">GND</text>
<path d="M585.4,385.6H578.8" stroke="#7a62f6" stroke-width="0.9" fill="none"/>
<path d="M578.8,385.6V392" stroke="#e09a28" stroke-width="0.9" fill="none"/>
<path d="M575,391.9h7.6l-3.8,4.4z" fill="#666"/>
<path d="M358.3,183.6H640.6V365.6M360.4,196.7H566V373.6M385.6,196.7V373.6M461,183.6V365.6" stroke="#0808ff" stroke-width="2.3" fill="none" stroke-linejoin="miter"/>
<path d="M349.7,181.6H356.4L358.2,183.6L356.4,185.6H349.7z" fill="#fffdf2" stroke="#e6a93c" stroke-width="0.7"/><path d="M351.9,182.7l2.6,1.6" stroke="#6a2ab0" stroke-width="0.8"/>
<path d="M351.6,194.7H358.4L360.2,196.7L358.4,198.7H351.6z" fill="#fffdf2" stroke="#e6a93c" stroke-width="0.7"/><path d="M353.8,195.8l2.6,1.6" stroke="#6a2ab0" stroke-width="0.8"/>
<path d="M328.2,405H335.8L337.6,407L335.8,409H328.2z" fill="#fffdf2" stroke="#e6a93c" stroke-width="0.7"/><path d="M330.4,406.1l2.6,1.6" stroke="#6a2ab0" stroke-width="0.8"/>
<path d="M328.2,417.8H335.8L337.6,419.8L335.8,421.8H328.2z" fill="#fffdf2" stroke="#e6a93c" stroke-width="0.7"/><path d="M330.4,418.9l2.6,1.6" stroke="#6a2ab0" stroke-width="0.8"/>
<path d="M328.2,424.6H335.8L337.6,426.6L335.8,428.6H328.2z" fill="#fffdf2" stroke="#e6a93c" stroke-width="0.7"/><path d="M330.4,425.7l2.6,1.6" stroke="#6a2ab0" stroke-width="0.8"/>
<path d="M363,180.2h9" stroke="#556" stroke-width="0.9" stroke-dasharray="1.5 0.6" opacity="0.7"/>
<path d="M464,180.2h9" stroke="#556" stroke-width="0.9" stroke-dasharray="1.5 0.6" opacity="0.7"/>
<path d="M366,193.6h10" stroke="#566" stroke-width="0.9" stroke-dasharray="1.5 0.6" opacity="0.7"/>
<path d="M390,193.6h10" stroke="#566" stroke-width="0.9" stroke-dasharray="1.5 0.6" opacity="0.7"/>
<path d="M342,404.4h5" stroke="#556" stroke-width="0.9" stroke-dasharray="1.5 0.6" opacity="0.7"/>
<path d="M342,417.3h6" stroke="#556" stroke-width="0.9" stroke-dasharray="1.5 0.6" opacity="0.7"/>
<path d="M342,424.2h5" stroke="#556" stroke-width="0.9" stroke-dasharray="1.5 0.6" opacity="0.7"/>
<path d="M661.4,399.1H766.6M661.4,414.2H766.6" stroke="#7a62f6" stroke-width="0.95"/>
<path d="M661.4,399.1V404.6M661.4,407.6V414.2" stroke="#7a62f6" stroke-width="0.95"/>
<path d="M659.5,404.7h3.8M659.5,407.4h3.8" stroke="#c88a20" stroke-width="0.9"/>
<text x="664.6" y="403.4" font-size="3" fill="#ff7a22">C1</text>
<text x="664.4" y="410.2" font-size="3.5" font-weight="bold" fill="#ff7a22">0.1uF,50V</text>
<path d="M664.8,408.8l4.2,-3.6" stroke="#ff7a22" stroke-width="0.5"/>
<path d="M697.5,399.1V404.6M697.5,407.6V414.2" stroke="#7a62f6" stroke-width="0.95"/>
<path d="M695.6,404.7h3.8M695.6,407.4h3.8" stroke="#c88a20" stroke-width="0.9"/>
<text x="700.7" y="403.4" font-size="3" fill="#ff7a22">C2</text>
<text x="700.5" y="410.2" font-size="3.5" font-weight="bold" fill="#ff7a22">0.1uF,50V</text>
<path d="M700.9,408.8l4.2,-3.6" stroke="#ff7a22" stroke-width="0.5"/>
<path d="M733.6,399.1V404.6M733.6,407.6V414.2" stroke="#7a62f6" stroke-width="0.95"/>
<path d="M731.7,404.7h3.8M731.7,407.4h3.8" stroke="#c88a20" stroke-width="0.9"/>
<text x="736.8" y="403.4" font-size="3" fill="#ff7a22">C3</text>
<text x="736.6" y="410.2" font-size="3.5" font-weight="bold" fill="#ff7a22">0.1uF,50V</text>
<path d="M737,408.8l4.2,-3.6" stroke="#ff7a22" stroke-width="0.5"/>
<path d="M766.6,399.1V404.6M766.6,407.6V414.2" stroke="#7a62f6" stroke-width="0.95"/>
<path d="M764.7,404.7h3.8M764.7,407.4h3.8" stroke="#c88a20" stroke-width="0.9"/>
<text x="769.8" y="403.4" font-size="3" fill="#ff7a22">C4</text>
<text x="769.6" y="410.2" font-size="3.5" font-weight="bold" fill="#ff7a22">0.1uF,50V</text>
<path d="M770,408.8l4.2,-3.6" stroke="#ff7a22" stroke-width="0.5"/>
<path d="M661.4,399.1V392.2M659.6,391.3h3.6M660,392.9l1.4,1.6l1.4,-1.6" stroke="#334" stroke-width="0.7" fill="none"/>
<rect x="658.6" y="402.2" width="1.3" height="3.6" fill="#222"/>
<path d="M766.6,414.2V424.4" stroke="#e09a28" stroke-width="0.9"/>
<rect x="763.8" y="415.2" width="1.3" height="3.6" fill="#111"/>
<path d="M762.7,424.3h7.6l-3.8,4.5z" fill="#666"/>
<text x="285.2" y="456.3" font-size="3.1" font-weight="bold" fill="#111" textLength="91" lengthAdjust="spacingAndGlyphs">THIS DOCUMENT CONTAINS INFORMATION PROPRIETARY</text>
<text x="285.2" y="460.65" font-size="3.1" font-weight="bold" fill="#111" textLength="81.6" lengthAdjust="spacingAndGlyphs">TO CADENCE DESIGN SYSTEMS INC. (CADENCE). USE</text>
<text x="285.2" y="465" font-size="3.1" font-weight="bold" fill="#111" textLength="91.6" lengthAdjust="spacingAndGlyphs">OR DISCLOSURE WITHOUT THE WRITTEN PERMISSION OF AN</text>
<text x="285.2" y="469.35" font-size="3.1" font-weight="bold" fill="#111" textLength="75.8" lengthAdjust="spacingAndGlyphs">OFFICER OF CADENCE IS EXPRESSLY FORBIDDEN.</text>
<text x="285.2" y="473.7" font-size="3.1" font-weight="bold" fill="#111" textLength="39" lengthAdjust="spacingAndGlyphs">COPYRIGHT (C) CADENCE</text>
<text transform="translate(581.6,477.6) scale(0.66,1)" font-size="13.8" fill="#111" stroke="#111" stroke-width="0.35" textLength="77.9" lengthAdjust="spacing">cadence</text>
<rect x="589.2" y="468.2" width="3.6" height="0.9" fill="#e02020"/>
<path d="M635.6,479.5V454.4H799.8M635.6,469.2H799.8M750.4,454.4V479.5M632.8,469.2h3" stroke="#444" stroke-width="0.8" fill="none"/>
<text x="637.2" y="457.8" font-size="2.4" font-weight="bold" fill="#111">TITLE</text>
<text x="637.2" y="472.4" font-size="2.4" font-weight="bold" fill="#111">DOCUMENT NUM</text>
<text x="752.2" y="457.8" font-size="2.4" font-weight="bold" fill="#111">DATE</text>
<text x="752.2" y="472.4" font-size="2.4" font-weight="bold" fill="#111">PAGE</text>
<text x="654" y="464.8" font-size="3.2" fill="#ff7a22">ram</text>
<text x="672" y="475.6" font-size="3.4" fill="#ff7a22">Prjye</text>
<text x="764.6" y="475.6" font-size="3.4" fill="#ff7a22">1 OF 2</text>
<text x="733" y="450.9" font-size="3.3" font-weight="bold" fill="#ff7a22" textLength="63.5" lengthAdjust="spacingAndGlyphs">Friday, October 10, 2025 11:58:55 AM</text>
</g>
<g transform="translate(0,354.4)" font-family="Liberation Sans, sans-serif">
<rect x="268.3" y="144.1" width="539.3" height="343.2" fill="#fff"/>
<rect x="276.4" y="152.5" width="523.6" height="327" fill="none" stroke="#333" stroke-width="0.8"/>
<path d="M342.2,144.1V152.5M342.2,479.5V487.3M407.4,144.1V152.5M407.4,479.5V487.3M472.8,144.1V152.5M472.8,479.5V487.3M538,144.1V152.5M538,479.5V487.3M603.5,144.1V152.5M603.5,479.5V487.3M668.6,144.1V152.5M668.6,479.5V487.3M733.8,144.1V152.5M733.8,479.5V487.3M268.3,226.2H276.4M800,226.2H807.6M268.3,299.7H276.4M800,299.7H807.6M268.3,373.1H276.4M800,373.1H807.6" stroke="#333" stroke-width="0.8"/>
<text x="310.5" y="150.4" font-size="4.2" font-weight="bold" text-anchor="middle" fill="#111">8</text>
<text x="310.5" y="485.2" font-size="4.2" font-weight="bold" text-anchor="middle" fill="#111">8</text>
<text x="376" y="150.4" font-size="4.2" font-weight="bold" text-anchor="middle" fill="#111">7</text>
<text x="376" y="485.2" font-size="4.2" font-weight="bold" text-anchor="middle" fill="#111">7</text>
<text x="441.3" y="150.4" font-size="4.2" font-weight="bold" text-anchor="middle" fill="#111">6</text>
<text x="441.3" y="485.2" font-size="4.2" font-weight="bold" text-anchor="middle" fill="#111">6</text>
<text x="506.6" y="150.4" font-size="4.2" font-weight="bold" text-anchor="middle" fill="#111">5</text>
<text x="506.6" y="485.2" font-size="4.2" font-weight="bold" text-anchor="middle" fill="#111">5</text>
<text x="571.95" y="150.4" font-size="4.2" font-weight="bold" text-anchor="middle" fill="#111">4</text>
<text x="571.95" y="485.2" font-size="4.2" font-weight="bold" text-anchor="middle" fill="#111">4</text>
<text x="637.25" y="150.4" font-size="4.2" font-weight="bold" text-anchor="middle" fill="#111">3</text>
<text x="637.25" y="485.2" font-size="4.2" font-weight="bold" text-anchor="middle" fill="#111">3</text>
<text x="702.4" y="150.4" font-size="4.2" font-weight="bold" text-anchor="middle" fill="#111">2</text>
<text x="702.4" y="485.2" font-size="4.2" font-weight="bold" text-anchor="middle" fill="#111">2</text>
<text x="768.1" y="150.4" font-size="4.2" font-weight="bold" text-anchor="middle" fill="#111">1</text>
<text x="768.1" y="485.2" font-size="4.2" font-weight="bold" text-anchor="middle" fill="#111">1</text>
<text x="272.3" y="185.2" font-size="4.2" font-weight="bold" text-anchor="middle" fill="#111">D</text>
<text x="804" y="189.2" font-size="4.2" font-weight="bold" text-anchor="middle" fill="#111">D</text>
<text x="272.3" y="263" font-size="4.2" font-weight="bold" text-anchor="middle" fill="#111">C</text>
<text x="804" y="263.4" font-size="4.2" font-weight="bold" text-anchor="middle" fill="#111">C</text>
<text x="272.3" y="335.7" font-size="4.2" font-weight="bold" text-anchor="middle" fill="#111">B</text>
<text x="804" y="336.1" font-size="4.2" font-weight="bold" text-anchor="middle" fill="#111">B</text>
<text x="272.3" y="414.1" font-size="4.2" font-weight="bold" text-anchor="middle" fill="#111">A</text>
<text x="804" y="414.5" font-size="4.2" font-weight="bold" text-anchor="middle" fill="#111">A</text>
<path d="M369.4,271.7H407.4M374.5,274.9H407.4M369.4,379.3H405.7M374.5,382.7H405.7M369.4,271.7V407M374.5,274.9V419.8M529.5,271.7H586.8M538,274.9H586.8M529.5,379.3H585.4M538,382.7H585.4M529.5,271.7V407M538,274.9V426.6M337.5,407H529.5M337.5,419.8H374.5M337.5,426.6H538" stroke="#7a62f6" stroke-width="1.15" fill="none"/>
<rect x="368.6" y="378.5" width="1.6" height="1.6" fill="#5a3ae0"/>
<rect x="373.7" y="381.9" width="1.6" height="1.6" fill="#5a3ae0"/>
<rect x="528.7" y="378.5" width="1.6" height="1.6" fill="#5a3ae0"/>
<rect x="537.2" y="381.9" width="1.6" height="1.6" fill="#5a3ae0"/>
<rect x="368.6" y="406.2" width="1.6" height="1.6" fill="#5a3ae0"/>
<path d="M386.8,209.7H410.2" stroke="#7a62f6" stroke-width="1.15"/>
<path d="M387,208.2l4.6,1.5" stroke="#3a3a48" stroke-width="0.7" opacity="0.85"/>
<path d="M395.9,208.7h6.2" stroke="#6a3a8a" stroke-width="0.9" stroke-dasharray="1.5 0.6" opacity="0.8"/>
<path d="M405.6,208.8h2.8" stroke="#a0602a" stroke-width="0.7" opacity="0.85"/>
<path d="M412.2,209.7h3.6" stroke="#4a8aa8" stroke-width="0.9" opacity="0.8"/>
<path d="M386.8,212.97H410.2" stroke="#7a62f6" stroke-width="1.15"/>
<path d="M387,211.47l4.6,1.5" stroke="#3a3a48" stroke-width="0.7" opacity="0.85"/>
<path d="M395.9,211.97h6.9" stroke="#80406a" stroke-width="0.9" stroke-dasharray="1.5 0.6" opacity="0.8"/>
<path d="M405.6,212.06h2.8" stroke="#a0602a" stroke-width="0.7" opacity="0.85"/>
<path d="M412.2,212.97h3.6" stroke="#4a8aa8" stroke-width="0.9" opacity="0.8"/>
<path d="M386.8,216.23H410.2" stroke="#7a62f6" stroke-width="1.15"/>
<path d="M387,214.73l4.6,1.5" stroke="#3a3a48" stroke-width="0.7" opacity="0.85"/>
<path d="M395.9,215.23h7.6" stroke="#3a5a8a" stroke-width="0.9" stroke-dasharray="1.5 0.6" opacity="0.8"/>
<path d="M405.6,215.33h2.8" stroke="#a0602a" stroke-width="0.7" opacity="0.85"/>
<path d="M412.2,216.23h3.6" stroke="#4a8aa8" stroke-width="0.9" opacity="0.8"/>
<path d="M386.8,219.5H410.2" stroke="#7a62f6" stroke-width="1.15"/>
<path d="M387,218l4.6,1.5" stroke="#3a3a48" stroke-width="0.7" opacity="0.85"/>
<path d="M395.9,218.5h6.2" stroke="#6a3a8a" stroke-width="0.9" stroke-dasharray="1.5 0.6" opacity="0.8"/>
<path d="M405.6,218.59h2.8" stroke="#a0602a" stroke-width="0.7" opacity="0.85"/>
<path d="M412.2,219.5h3.6" stroke="#4a8aa8" stroke-width="0.9" opacity="0.8"/>
<path d="M386.8,222.76H410.2" stroke="#7a62f6" stroke-width="1.15"/>
<path d="M387,221.26l4.6,1.5" stroke="#3a3a48" stroke-width="0.7" opacity="0.85"/>
<path d="M395.9,221.76h6.9" stroke="#80406a" stroke-width="0.9" stroke-dasharray="1.5 0.6" opacity="0.8"/>
<path d="M405.6,221.86h2.8" stroke="#a0602a" stroke-width="0.7" opacity="0.85"/>
<path d="M412.2,222.76h3.6" stroke="#4a8aa8" stroke-width="0.9" opacity="0.8"/>
<path d="M386.8,226.03H410.2" stroke="#7a62f6" stroke-width="1.15"/>
<path d="M387,224.53l4.6,1.5" stroke="#3a3a48" stroke-width="0.7" opacity="0.85"/>
<path d="M395.9,225.03h7.6" stroke="#3a5a8a" stroke-width="0.9" stroke-dasharray="1.5 0.6" opacity="0.8"/>
<path d="M405.6,225.12h2.8" stroke="#a0602a" stroke-width="0.7" opacity="0.85"/>
<path d="M412.2,226.03h3.6" stroke="#4a8aa8" stroke-width="0.9" opacity="0.8"/>
<path d="M386.8,229.29H410.2" stroke="#7a62f6" stroke-width="1.15"/>
<path d="M387,227.79l4.6,1.5" stroke="#3a3a48" stroke-width="0.7" opacity="0.85"/>
<path d="M395.9,228.29h6.2" stroke="#6a3a8a" stroke-width="0.9" stroke-dasharray="1.5 0.6" opacity="0.8"/>
<path d="M405.6,228.39h2.8" stroke="#a0602a" stroke-width="0.7" opacity="0.85"/>
<path d="M412.2,229.29h3.6" stroke="#4a8aa8" stroke-width="0.9" opacity="0.8"/>
<path d="M386.8,232.56H410.2" stroke="#7a62f6" stroke-width="1.15"/>
<path d="M387,231.06l4.6,1.5" stroke="#3a3a48" stroke-width="0.7" opacity="0.85"/>
<path d="M395.9,231.56h6.9" stroke="#80406a" stroke-width="0.9" stroke-dasharray="1.5 0.6" opacity="0.8"/>
<path d="M405.6,231.66h2.8" stroke="#a0602a" stroke-width="0.7" opacity="0.85"/>
<path d="M412.2,232.56h3.6" stroke="#4a8aa8" stroke-width="0.9" opacity="0.8"/>
<path d="M386.8,235.82H410.2" stroke="#7a62f6" stroke-width="1.15"/>
<path d="M387,234.32l4.6,1.5" stroke="#3a3a48" stroke-width="0.7" opacity="0.85"/>
<path d="M395.9,234.82h7.6" stroke="#3a5a8a" stroke-width="0.9" stroke-dasharray="1.5 0.6" opacity="0.8"/>
<path d="M405.6,234.92h2.8" stroke="#a0602a" stroke-width="0.7" opacity="0.85"/>
<path d="M412.2,235.82h3.6" stroke="#4a8aa8" stroke-width="0.9" opacity="0.8"/>
<path d="M386.8,239.09H410.2" stroke="#7a62f6" stroke-width="1.15"/>
<path d="M387,237.59l4.6,1.5" stroke="#3a3a48" stroke-width="0.7" opacity="0.85"/>
<path d="M395.9,238.09h6.2" stroke="#6a3a8a" stroke-width="0.9" stroke-dasharray="1.5 0.6" opacity="0.8"/>
<path d="M405.6,238.19h2.8" stroke="#a0602a" stroke-width="0.7" opacity="0.85"/>
<path d="M412.2,239.09h3.6" stroke="#4a8aa8" stroke-width="0.9" opacity="0.8"/>
<path d="M386.8,242.35H410.2" stroke="#7a62f6" stroke-width="1.15"/>
<path d="M387,240.85l4.6,1.5" stroke="#3a3a48" stroke-width="0.7" opacity="0.85"/>
<path d="M395.9,241.35h6.9" stroke="#80406a" stroke-width="0.9" stroke-dasharray="1.5 0.6" opacity="0.8"/>
<path d="M405.6,241.45h2.8" stroke="#a0602a" stroke-width="0.7" opacity="0.85"/>
<path d="M412.2,242.35h5.2" stroke="#4a8aa8" stroke-width="0.9" opacity="0.8"/>
<path d="M386.8,245.62H410.2" stroke="#7a62f6" stroke-width="1.15"/>
<path d="M387,244.12l4.6,1.5" stroke="#3a3a48" stroke-width="0.7" opacity="0.85"/>
<path d="M395.9,244.62h7.6" stroke="#3a5a8a" stroke-width="0.9" stroke-dasharray="1.5 0.6" opacity="0.8"/>
<path d="M405.6,244.72h2.8" stroke="#a0602a" stroke-width="0.7" opacity="0.85"/>
<path d="M412.2,245.62h5.2" stroke="#4a8aa8" stroke-width="0.9" opacity="0.8"/>
<path d="M386.8,248.88H410.2" stroke="#7a62f6" stroke-width="1.15"/>
<path d="M387,247.38l4.6,1.5" stroke="#3a3a48" stroke-width="0.7" opacity="0.85"/>
<path d="M395.9,247.88h6.2" stroke="#6a3a8a" stroke-width="0.9" stroke-dasharray="1.5 0.6" opacity="0.8"/>
<path d="M405.6,247.98h2.8" stroke="#a0602a" stroke-width="0.7" opacity="0.85"/>
<path d="M412.2,248.88h5.2" stroke="#4a8aa8" stroke-width="0.9" opacity="0.8"/>
<path d="M386.8,252.15H410.2" stroke="#7a62f6" stroke-width="1.15"/>
<path d="M387,250.65l4.6,1.5" stroke="#3a3a48" stroke-width="0.7" opacity="0.85"/>
<path d="M395.9,251.15h6.9" stroke="#80406a" stroke-width="0.9" stroke-dasharray="1.5 0.6" opacity="0.8"/>
<path d="M405.6,251.25h2.8" stroke="#a0602a" stroke-width="0.7" opacity="0.85"/>
<path d="M412.2,252.15h5.2" stroke="#4a8aa8" stroke-width="0.9" opacity="0.8"/>
<path d="M386.8,255.41H410.2" stroke="#7a62f6" stroke-width="1.15"/>
<path d="M387,253.91l4.6,1.5" stroke="#3a3a48" stroke-width="0.7" opacity="0.85"/>
<path d="M395.9,254.41h7.6" stroke="#3a5a8a" stroke-width="0.9" stroke-dasharray="1.5 0.6" opacity="0.8"/>
<path d="M405.6,254.51h2.8" stroke="#a0602a" stroke-width="0.7" opacity="0.85"/>
<path d="M412.2,255.41h5.2" stroke="#4a8aa8" stroke-width="0.9" opacity="0.8"/>
<path d="M386.8,258.68H410.2" stroke="#7a62f6" stroke-width="1.15"/>
<path d="M387,257.18l4.6,1.5" stroke="#3a3a48" stroke-width="0.7" opacity="0.85"/>
<path d="M395.9,257.68h6.2" stroke="#6a3a8a" stroke-width="0.9" stroke-dasharray="1.5 0.6" opacity="0.8"/>
<path d="M405.6,257.78h2.8" stroke="#a0602a" stroke-width="0.7" opacity="0.85"/>
<path d="M412.2,258.68h5.2" stroke="#4a8aa8" stroke-width="0.9" opacity="0.8"/>
<path d="M386.8,261.94H410.2" stroke="#7a62f6" stroke-width="1.15"/>
<path d="M387,260.44l4.6,1.5" stroke="#3a3a48" stroke-width="0.7" opacity="0.85"/>
<path d="M395.9,260.94h6.9" stroke="#80406a" stroke-width="0.9" stroke-dasharray="1.5 0.6" opacity="0.8"/>
<path d="M405.6,261.04h2.8" stroke="#a0602a" stroke-width="0.7" opacity="0.85"/>
<path d="M412.2,261.94h5.2" stroke="#4a8aa8" stroke-width="0.9" opacity="0.8"/>
<path d="M386.8,265.21H410.2" stroke="#7a62f6" stroke-width="1.15"/>
<path d="M387,263.71l4.6,1.5" stroke="#3a3a48" stroke-width="0.7" opacity="0.85"/>
<path d="M395.9,264.21h7.6" stroke="#3a5a8a" stroke-width="0.9" stroke-dasharray="1.5 0.6" opacity="0.8"/>
<path d="M405.6,264.31h2.8" stroke="#a0602a" stroke-width="0.7" opacity="0.85"/>
<path d="M412.2,265.21h5.2" stroke="#4a8aa8" stroke-width="0.9" opacity="0.8"/>
<rect x="410.4" y="203.2" width="26.5" height="78.2" fill="none" stroke="#444" stroke-width="0.85"/>
<path d="M436.9,209.1h3.2l1.4,-1.2" stroke="#444" stroke-width="0.55" fill="none"/>
<path d="M430.7,209.1h1.4" stroke="#d08a28" stroke-width="0.9" opacity="0.8"/><path d="M432.1,209.1h2.6" stroke="#4a68b8" stroke-width="0.9" opacity="0.8"/>
<path d="M436.9,211.9h3.2l1.4,-1.2" stroke="#444" stroke-width="0.55" fill="none"/>
<path d="M430.7,211.9h1.4" stroke="#d08a28" stroke-width="0.9" opacity="0.8"/><path d="M432.1,211.9h2.6" stroke="#4a68b8" stroke-width="0.9" opacity="0.8"/>
<path d="M436.9,215.3h3.2l1.4,-1.2" stroke="#444" stroke-width="0.55" fill="none"/>
<path d="M430.7,215.3h1.4" stroke="#d08a28" stroke-width="0.9" opacity="0.8"/><path d="M432.1,215.3h2.6" stroke="#4a68b8" stroke-width="0.9" opacity="0.8"/>
<path d="M436.9,231.7H459.2l1.4,-1.3" stroke="#7a62f6" stroke-width="1.1" fill="none"/>
<path d="M442.9,230.4h6.5" stroke="#b03a6a" stroke-width="0.8" stroke-dasharray="1.6 0.6" opacity="0.8"/>
<path d="M439.5,230.8h2M455.2,231.5l4.2,-1.5" stroke="#3a3a48" stroke-width="0.7" fill="none"/>
<path d="M429.7,231.7h2.2" stroke="#d08a28" stroke-width="0.9"/><path d="M431.9,231.7h2.6" stroke="#3a58c0" stroke-width="0.9"/>
<path d="M436.9,238.2H459.2l1.4,-1.3" stroke="#7a62f6" stroke-width="1.1" fill="none"/>
<path d="M442.9,236.9h6.5" stroke="#b03a6a" stroke-width="0.8" stroke-dasharray="1.6 0.6" opacity="0.8"/>
<path d="M439.5,237.3h2M455.2,238l4.2,-1.5" stroke="#3a3a48" stroke-width="0.7" fill="none"/>
<path d="M429.7,238.2h2.2" stroke="#d08a28" stroke-width="0.9"/><path d="M431.9,238.2h2.6" stroke="#3a58c0" stroke-width="0.9"/>
<path d="M436.9,244.7H459.2l1.4,-1.3" stroke="#7a62f6" stroke-width="1.1" fill="none"/>
<path d="M442.9,243.4h6.5" stroke="#b03a6a" stroke-width="0.8" stroke-dasharray="1.6 0.6" opacity="0.8"/>
<path d="M439.5,243.8h2M455.2,244.5l4.2,-1.5" stroke="#3a3a48" stroke-width="0.7" fill="none"/>
<path d="M429.7,244.7h2.2" stroke="#d08a28" stroke-width="0.9"/><path d="M431.9,244.7h2.6" stroke="#3a58c0" stroke-width="0.9"/>
<path d="M436.9,251.2H459.2l1.4,-1.3" stroke="#7a62f6" stroke-width="1.1" fill="none"/>
<path d="M442.9,249.9h6.5" stroke="#b03a6a" stroke-width="0.8" stroke-dasharray="1.6 0.6" opacity="0.8"/>
<path d="M439.5,250.3h2M455.2,251l4.2,-1.5" stroke="#3a3a48" stroke-width="0.7" fill="none"/>
<path d="M429.7,251.2h2.2" stroke="#d08a28" stroke-width="0.9"/><path d="M431.9,251.2h2.6" stroke="#3a58c0" stroke-width="0.9"/>
<circle cx="408.8" cy="271.7" r="1.35" fill="#fff" stroke="#222" stroke-width="0.6"/>
<path d="M412.2,272l2.4,-1.3" stroke="#444" stroke-width="0.6"/>
<circle cx="408.8" cy="274.9" r="1.35" fill="#fff" stroke="#222" stroke-width="0.6"/>
<path d="M412.2,275.2l2.4,-1.3" stroke="#444" stroke-width="0.6"/>
<circle cx="408.8" cy="278" r="1.35" fill="#fff" stroke="#222" stroke-width="0.6"/>
<path d="M412.2,278.3l2.4,-1.3" stroke="#444" stroke-width="0.6"/>
<text x="423.55" y="201.3" font-size="3.3" font-weight="bold" text-anchor="middle" fill="#422">U1</text>
<text x="423.55" y="206.3" font-size="2.4" font-weight="bold" text-anchor="middle" fill="#4a5aa0">SRAM256K</text>
<text x="423.55" y="280" font-size="2.4" font-weight="bold" text-anchor="middle" fill="#4a68b8">GND</text>
<path d="M407.4,278H400.6" stroke="#7a62f6" stroke-width="0.9" fill="none"/>
<path d="M400.6,278V284.1" stroke="#e09a28" stroke-width="0.9" fill="none"/>
<path d="M396.8,284h7.6l-3.8,4.4z" fill="#666"/>
<path d="M386.8,317.3H408.5" stroke="#7a62f6" stroke-width="1.15"/>
<path d="M387,315.8l4.6,1.5" stroke="#3a3a48" stroke-width="0.7" opacity="0.85"/>
<path d="M395.9,316.3h6.2" stroke="#6a3a8a" stroke-width="0.9" stroke-dasharray="1.5 0.6" opacity="0.8"/>
<path d="M403.9,316.4h2.8" stroke="#a0602a" stroke-width="0.7" opacity="0.85"/>
<path d="M410.5,317.3h3.6" stroke="#4a8aa8" stroke-width="0.9" opacity="0.8"/>
<path d="M386.8,320.56H408.5" stroke="#7a62f6" stroke-width="1.15"/>
<path d="M387,319.06l4.6,1.5" stroke="#3a3a48" stroke-width="0.7" opacity="0.85"/>
<path d="M395.9,319.56h6.9" stroke="#80406a" stroke-width="0.9" stroke-dasharray="1.5 0.6" opacity="0.8"/>
<path d="M403.9,319.66h2.8" stroke="#a0602a" stroke-width="0.7" opacity="0.85"/>
<path d="M410.5,320.56h3.6" stroke="#4a8aa8" stroke-width="0.9" opacity="0.8"/>
<path d="M386.8,323.83H408.5" stroke="#7a62f6" stroke-width="1.15"/>
<path d="M387,322.33l4.6,1.5" stroke="#3a3a48" stroke-width="0.7" opacity="0.85"/>
<path d="M395.9,322.83h7.6" stroke="#3a5a8a" stroke-width="0.9" stroke-dasharray="1.5 0.6" opacity="0.8"/>
<path d="M403.9,322.93h2.8" stroke="#a0602a" stroke-width="0.7" opacity="0.85"/>
<path d="M410.5,323.83h3.6" stroke="#4a8aa8" stroke-width="0.9" opacity="0.8"/>
<path d="M386.8,327.09H408.5" stroke="#7a62f6" stroke-width="1.15"/>
<path d="M387,325.59l4.6,1.5" stroke="#3a3a48" stroke-width="0.7" opacity="0.85"/>
<path d="M395.9,326.09h6.2" stroke="#6a3a8a" stroke-width="0.9" stroke-dasharray="1.5 0.6" opacity="0.8"/>
<path d="M403.9,326.19h2.8" stroke="#a0602a" stroke-width="0.7" opacity="0.85"/>
<path d="M410.5,327.09h3.6" stroke="#4a8aa8" stroke-width="0.9" opacity="0.8"/>
<path d="M386.8,330.36H408.5" stroke="#7a62f6" stroke-width="1.15"/>
<path d="M387,328.86l4.6,1.5" stroke="#3a3a48" stroke-width="0.7" opacity="0.85"/>
<path d="M395.9,329.36h6.9" stroke="#80406a" stroke-width="0.9" stroke-dasharray="1.5 0.6" opacity="0.8"/>
<path d="M403.9,329.46h2.8" stroke="#a0602a" stroke-width="0.7" opacity="0.85"/>
<path d="M410.5,330.36h3.6" stroke="#4a8aa8" stroke-width="0.9" opacity="0.8"/>
<path d="M386.8,333.62H408.5" stroke="#7a62f6" stroke-width="1.15"/>
<path d="M387,332.12l4.6,1.5" stroke="#3a3a48" stroke-width="0.7" opacity="0.85"/>
<path d="M395.9,332.62h7.6" stroke="#3a5a8a" stroke-width="0.9" stroke-dasharray="1.5 0.6" opacity="0.8"/>
<path d="M403.9,332.72h2.8" stroke="#a0602a" stroke-width="0.7" opacity="0.85"/>
<path d="M410.5,333.62h3.6" stroke="#4a8aa8" stroke-width="0.9" opacity="0.8"/>
<path d="M386.8,336.89H408.5" stroke="#7a62f6" stroke-width="1.15"/>
<path d="M387,335.39l4.6,1.5" stroke="#3a3a48" stroke-width="0.7" opacity="0.85"/>
<path d="M395.9,335.89h6.2" stroke="#6a3a8a" stroke-width="0.9" stroke-dasharray="1.5 0.6" opacity="0.8"/>
<path d="M403.9,335.99h2.8" stroke="#a0602a" stroke-width="0.7" opacity="0.85"/>
<path d="M410.5,336.89h3.6" stroke="#4a8aa8" stroke-width="0.9" opacity="0.8"/>
<path d="M386.8,340.15H408.5" stroke="#7a62f6" stroke-width="1.15"/>
<path d="M387,338.65l4.6,1.5" stroke="#3a3a48" stroke-width="0.7" opacity="0.85"/>
<path d="M395.9,339.15h6.9" stroke="#80406a" stroke-width="0.9" stroke-dasharray="1.5 0.6" opacity="0.8"/>
<path d="M403.9,339.25h2.8" stroke="#a0602a" stroke-width="0.7" opacity="0.85"/>
<path d="M410.5,340.15h3.6" stroke="#4a8aa8" stroke-width="0.9" opacity="0.8"/>
<path d="M386.8,343.42H408.5" stroke="#7a62f6" stroke-width="1.15"/>
<path d="M387,341.92l4.6,1.5" stroke="#3a3a48" stroke-width="0.7" opacity="0.85"/>
<path d="M395.9,342.42h7.6" stroke="#3a5a8a" stroke-width="0.9" stroke-dasharray="1.5 0.6" opacity="0.8"/>
<path d="M403.9,342.52h2.8" stroke="#a0602a" stroke-width="0.7" opacity="0.85"/>
<path d="M410.5,343.42h3.6" stroke="#4a8aa8" stroke-width="0.9" opacity="0.8"/>
<path d="M386.8,346.68H408.5" stroke="#7a62f6" stroke-width="1.15"/>
<path d="M387,345.18l4.6,1.5" stroke="#3a3a48" stroke-width="0.7" opacity="0.85"/>
<path d="M395.9,345.68h6.2" stroke="#6a3a8a" stroke-width="0.9" stroke-dasharray="1.5 0.6" opacity="0.8"/>
<path d="M403.9,345.78h2.8" stroke="#a0602a" stroke-width="0.7" opacity="0.85"/>
<path d="M410.5,346.68h3.6" stroke="#4a8aa8" stroke-width="0.9" opacity="0.8"/>
<path d="M386.8,349.95H408.5" stroke="#7a62f6" stroke-width="1.15"/>
<path d="M387,348.45l4.6,1.5" stroke="#3a3a48" stroke-width="0.7" opacity="0.85"/>
<path d="M395.9,348.95h6.9" stroke="#80406a" stroke-width="0.9" stroke-dasharray="1.5 0.6" opacity="0.8"/>
<path d="M403.9,349.05h2.8" stroke="#a0602a" stroke-width="0.7" opacity="0.85"/>
<path d="M410.5,349.95h5.2" stroke="#4a8aa8" stroke-width="0.9" opacity="0.8"/>
<path d="M386.8,353.21H408.5" stroke="#7a62f6" stroke-width="1.15"/>
<path d="M387,351.71l4.6,1.5" stroke="#3a3a48" stroke-width="0.7" opacity="0.85"/>
<path d="M395.9,352.21h7.6" stroke="#3a5a8a" stroke-width="0.9" stroke-dasharray="1.5 0.6" opacity="0.8"/>
<path d="M403.9,352.31h2.8" stroke="#a0602a" stroke-width="0.7" opacity="0.85"/>
<path d="M410.5,353.21h5.2" stroke="#4a8aa8" stroke-width="0.9" opacity="0.8"/>
<path d="M386.8,356.48H408.5" stroke="#7a62f6" stroke-width="1.15"/>
<path d="M387,354.98l4.6,1.5" stroke="#3a3a48" stroke-width="0.7" opacity="0.85"/>
<path d="M395.9,355.48h6.2" stroke="#6a3a8a" stroke-width="0.9" stroke-dasharray="1.5 0.6" opacity="0.8"/>
<path d="M403.9,355.58h2.8" stroke="#a0602a" stroke-width="0.7" opacity="0.85"/>
<path d="M410.5,356.48h5.2" stroke="#4a8aa8" stroke-width="0.9" opacity="0.8"/>
<path d="M386.8,359.74H408.5" stroke="#7a62f6" stroke-width="1.15"/>
<path d="M387,358.24l4.6,1.5" stroke="#3a3a48" stroke-width="0.7" opacity="0.85"/>
<path d="M395.9,358.74h6.9" stroke="#80406a" stroke-width="0.9" stroke-dasharray="1.5 0.6" opacity="0.8"/>
<path d="M403.9,358.84h2.8" stroke="#a0602a" stroke-width="0.7" opacity="0.85"/>
<path d="M410.5,359.74h5.2" stroke="#4a8aa8" stroke-width="0.9" opacity="0.8"/>
<path d="M386.8,363.01H408.5" stroke="#7a62f6" stroke-width="1.15"/>
<path d="M387,361.51l4.6,1.5" stroke="#3a3a48" stroke-width="0.7" opacity="0.85"/>
<path d="M395.9,362.01h7.6" stroke="#3a5a8a" stroke-width="0.9" stroke-dasharray="1.5 0.6" opacity="0.8"/>
<path d="M403.9,362.11h2.8" stroke="#a0602a" stroke-width="0.7" opacity="0.85"/>
<path d="M410.5,363.01h5.2" stroke="#4a8aa8" stroke-width="0.9" opacity="0.8"/>
<path d="M386.8,366.27H408.5" stroke="#7a62f6" stroke-width="1.15"/>
<path d="M387,364.77l4.6,1.5" stroke="#3a3a48" stroke-width="0.7" opacity="0.85"/>
<path d="M395.9,365.27h6.2" stroke="#6a3a8a" stroke-width="0.9" stroke-dasharray="1.5 0.6" opacity="0.8"/>
<path d="M403.9,365.38h2.8" stroke="#a0602a" stroke-width="0.7" opacity="0.85"/>
<path d="M410.5,366.27h5.2" stroke="#4a8aa8" stroke-width="0.9" opacity="0.8"/>
<path d="M386.8,369.54H408.5" stroke="#7a62f6" stroke-width="1.15"/>
<path d="M387,368.04l4.6,1.5" stroke="#3a3a48" stroke-width="0.7" opacity="0.85"/>
<path d="M395.9,368.54h6.9" stroke="#80406a" stroke-width="0.9" stroke-dasharray="1.5 0.6" opacity="0.8"/>
<path d="M403.9,368.64h2.8" stroke="#a0602a" stroke-width="0.7" opacity="0.85"/>
<path d="M410.5,369.54h5.2" stroke="#4a8aa8" stroke-width="0.9" opacity="0.8"/>
<path d="M386.8,372.8H408.5" stroke="#7a62f6" stroke-width="1.15"/>
<path d="M387,371.3l4.6,1.5" stroke="#3a3a48" stroke-width="0.7" opacity="0.85"/>
<path d="M395.9,371.8h7.6" stroke="#3a5a8a" stroke-width="0.9" stroke-dasharray="1.5 0.6" opacity="0.8"/>
<path d="M403.9,371.9h2.8" stroke="#a0602a" stroke-width="0.7" opacity="0.85"/>
<path d="M410.5,372.8h5.2" stroke="#4a8aa8" stroke-width="0.9" opacity="0.8"/>
<rect x="408.7" y="310.8" width="27.2" height="78.5" fill="none" stroke="#444" stroke-width="0.85"/>
<path d="M435.9,316.7h3.2l1.4,-1.2" stroke="#444" stroke-width="0.55" fill="none"/>
<path d="M429.7,316.7h1.4" stroke="#d08a28" stroke-width="0.9" opacity="0.8"/><path d="M431.1,316.7h2.6" stroke="#4a68b8" stroke-width="0.9" opacity="0.8"/>
<path d="M435.9,319.5h3.2l1.4,-1.2" stroke="#444" stroke-width="0.55" fill="none"/>
<path d="M429.7,319.5h1.4" stroke="#d08a28" stroke-width="0.9" opacity="0.8"/><path d="M431.1,319.5h2.6" stroke="#4a68b8" stroke-width="0.9" opacity="0.8"/>
<path d="M435.9,322.9h3.2l1.4,-1.2" stroke="#444" stroke-width="0.55" fill="none"/>
<path d="M429.7,322.9h1.4" stroke="#d08a28" stroke-width="0.9" opacity="0.8"/><path d="M431.1,322.9h2.6" stroke="#4a68b8" stroke-width="0.9" opacity="0.8"/>
<path d="M435.9,339.3H459.2l1.4,-1.3" stroke="#7a62f6" stroke-width="1.1" fill="none"/>
<path d="M441.9,338h6.5" stroke="#b03a6a" stroke-width="0.8" stroke-dasharray="1.6 0.6" opacity="0.8"/>
<path d="M438.5,338.4h2M455.2,339.1l4.2,-1.5" stroke="#3a3a48" stroke-width="0.7" fill="none"/>
<path d="M428.7,339.3h2.2" stroke="#d08a28" stroke-width="0.9"/><path d="M430.9,339.3h2.6" stroke="#3a58c0" stroke-width="0.9"/>
<path d="M435.9,345.8H459.2l1.4,-1.3" stroke="#7a62f6" stroke-width="1.1" fill="none"/>
<path d="M441.9,344.5h6.5" stroke="#b03a6a" stroke-width="0.8" stroke-dasharray="1.6 0.6" opacity="0.8"/>
<path d="M438.5,344.9h2M455.2,345.6l4.2,-1.5" stroke="#3a3a48" stroke-width="0.7" fill="none"/>
<path d="M428.7,345.8h2.2" stroke="#d08a28" stroke-width="0.9"/><path d="M430.9,345.8h2.6" stroke="#3a58c0" stroke-width="0.9"/>
<path d="M435.9,352.3H459.2l1.4,-1.3" stroke="#7a62f6" stroke-width="1.1" fill="none"/>
<path d="M441.9,351h6.5" stroke="#b03a6a" stroke-width="0.8" stroke-dasharray="1.6 0.6" opacity="0.8"/>
<path d="M438.5,351.4h2M455.2,352.1l4.2,-1.5" stroke="#3a3a48" stroke-width="0.7" fill="none"/>
<path d="M428.7,352.3h2.2" stroke="#d08a28" stroke-width="0.9"/><path d="M430.9,352.3h2.6" stroke="#3a58c0" stroke-width="0.9"/>
<path d="M435.9,358.8H459.2l1.4,-1.3" stroke="#7a62f6" stroke-width="1.1" fill="none"/>
<path d="M441.9,357.5h6.5" stroke="#b03a6a" stroke-width="0.8" stroke-dasharray="1.6 0.6" opacity="0.8"/>
<path d="M438.5,357.9h2M455.2,358.6l4.2,-1.5" stroke="#3a3a48" stroke-width="0.7" fill="none"/>
<path d="M428.7,358.8h2.2" stroke="#d08a28" stroke-width="0.9"/><path d="M430.9,358.8h2.6" stroke="#3a58c0" stroke-width="0.9"/>
<circle cx="407.1" cy="379.3" r="1.35" fill="#fff" stroke="#222" stroke-width="0.6"/>
<path d="M410.5,379.6l2.4,-1.3" stroke="#444" stroke-width="0.6"/>
<circle cx="407.1" cy="382.5" r="1.35" fill="#fff" stroke="#222" stroke-width="0.6"/>
<path d="M410.5,382.8l2.4,-1.3" stroke="#444" stroke-width="0.6"/>
<circle cx="407.1" cy="385.6" r="1.35" fill="#fff" stroke="#222" stroke-width="0.6"/>
<path d="M410.5,385.9l2.4,-1.3" stroke="#444" stroke-width="0.6"/>
<text x="422.2" y="308.9" font-size="3.3" font-weight="bold" text-anchor="middle" fill="#422">U2</text>
<text x="422.2" y="313.9" font-size="2.4" font-weight="bold" text-anchor="middle" fill="#4a5aa0">SRAM256K</text>
<text x="422.2" y="387.9" font-size="2.4" font-weight="bold" text-anchor="middle" fill="#4a68b8">GND</text>
<path d="M405.7,385.6H398.8" stroke="#7a62f6" stroke-width="0.9" fill="none"/>
<path d="M398.8,385.6V392" stroke="#e09a28" stroke-width="0.9" fill="none"/>
<path d="M395,391.9h7.6l-3.8,4.4z" fill="#666"/>
<path d="M562,209.7H589.6" stroke="#7a62f6" stroke-width="1.15"/>
<path d="M562.2,208.2l4.6,1.5" stroke="#3a3a48" stroke-width="0.7" opacity="0.85"/>
<path d="M571.1,208.7h6.2" stroke="#6a3a8a" stroke-width="0.9" stroke-dasharray="1.5 0.6" opacity="0.8"/>
<path d="M585,208.8h2.8" stroke="#a0602a" stroke-width="0.7" opacity="0.85"/>
<path d="M591.6,209.7h3.6" stroke="#4a8aa8" stroke-width="0.9" opacity="0.8"/>
<path d="M562,212.97H589.6" stroke="#7a62f6" stroke-width="1.15"/>
<path d="M562.2,211.47l4.6,1.5" stroke="#3a3a48" stroke-width="0.7" opacity="0.85"/>
<path d="M571.1,211.97h6.9" stroke="#80406a" stroke-width="0.9" stroke-dasharray="1.5 0.6" opacity="0.8"/>
<path d="M585,212.06h2.8" stroke="#a0602a" stroke-width="0.7" opacity="0.85"/>
<path d="M591.6,212.97h3.6" stroke="#4a8aa8" stroke-width="0.9" opacity="0.8"/>
<path d="M562,216.23H589.6" stroke="#7a62f6" stroke-width="1.15"/>
<path d="M562.2,214.73l4.6,1.5" stroke="#3a3a48" stroke-width="0.7" opacity="0.85"/>
<path d="M571.1,215.23h7.6" stroke="#3a5a8a" stroke-width="0.9" stroke-dasharray="1.5 0.6" opacity="0.8"/>
<path d="M585,215.33h2.8" stroke="#a0602a" stroke-width="0.7" opacity="0.85"/>
<path d="M591.6,216.23h3.6" stroke="#4a8aa8" stroke-width="0.9" opacity="0.8"/>
<path d="M562,219.5H589.6" stroke="#7a62f6" stroke-width="1.15"/>
<path d="M562.2,218l4.6,1.5" stroke="#3a3a48" stroke-width="0.7" opacity="0.85"/>
<path d="M571.1,218.5h6.2" stroke="#6a3a8a" stroke-width="0.9" stroke-dasharray="1.5 0.6" opacity="0.8"/>
<path d="M585,218.59h2.8" stroke="#a0602a" stroke-width="0.7" opacity="0.85"/>
<path d="M591.6,219.5h3.6" stroke="#4a8aa8" stroke-width="0.9" opacity="0.8"/>
<path d="M562,222.76H589.6" stroke="#7a62f6" stroke-width="1.15"/>
<path d="M562.2,221.26l4.6,1.5" stroke="#3a3a48" stroke-width="0.7" opacity="0.85"/>
<path d="M571.1,221.76h6.9" stroke="#80406a" stroke-width="0.9" stroke-dasharray="1.5 0.6" opacity="0.8"/>
<path d="M585,221.86h2.8" stroke="#a0602a" stroke-width="0.7" opacity="0.85"/>
<path d="M591.6,222.76h3.6" stroke="#4a8aa8" stroke-width="0.9" opacity="0.8"/>
<path d="M562,226.03H589.6" stroke="#7a62f6" stroke-width="1.15"/>
<path d="M562.2,224.53l4.6,1.5" stroke="#3a3a48" stroke-width="0.7" opacity="0.85"/>
<path d="M571.1,225.03h7.6" stroke="#3a5a8a" stroke-width="0.9" stroke-dasharray="1.5 0.6" opacity="0.8"/>
<path d="M585,225.12h2.8" stroke="#a0602a" stroke-width="0.7" opacity="0.85"/>
<path d="M591.6,226.03h3.6" stroke="#4a8aa8" stroke-width="0.9" opacity="0.8"/>
<path d="M562,229.29H589.6" stroke="#7a62f6" stroke-width="1.15"/>
<path d="M562.2,227.79l4.6,1.5" stroke="#3a3a48" stroke-width="0.7" opacity="0.85"/>
<path d="M571.1,228.29h6.2" stroke="#6a3a8a" stroke-width="0.9" stroke-dasharray="1.5 0.6" opacity="0.8"/>
<path d="M585,228.39h2.8" stroke="#a0602a" stroke-width="0.7" opacity="0.85"/>
<path d="M591.6,229.29h3.6" stroke="#4a8aa8" stroke-width="0.9" opacity="0.8"/>
<path d="M562,232.56H589.6" stroke="#7a62f6" stroke-width="1.15"/>
<path d="M562.2,231.06l4.6,1.5" stroke="#3a3a48" stroke-width="0.7" opacity="0.85"/>
<path d="M571.1,231.56h6.9" stroke="#80406a" stroke-width="0.9" stroke-dasharray="1.5 0.6" opacity="0.8"/>
<path d="M585,231.66h2.8" stroke="#a0602a" stroke-width="0.7" opacity="0.85"/>
<path d="M591.6,232.56h3.6" stroke="#4a8aa8" stroke-width="0.9" opacity="0.8"/>
<path d="M562,235.82H589.6" stroke="#7a62f6" stroke-width="1.15"/>
<path d="M562.2,234.32l4.6,1.5" stroke="#3a3a48" stroke-width="0.7" opacity="0.85"/>
<path d="M571.1,234.82h7.6" stroke="#3a5a8a" stroke-width="0.9" stroke-dasharray="1.5 0.6" opacity="0.8"/>
<path d="M585,234.92h2.8" stroke="#a0602a" stroke-width="0.7" opacity="0.85"/>
<path d="M591.6,235.82h3.6" stroke="#4a8aa8" stroke-width="0.9" opacity="0.8"/>
<path d="M562,239.09H589.6" stroke="#7a62f6" stroke-width="1.15"/>
<path d="M562.2,237.59l4.6,1.5" stroke="#3a3a48" stroke-width="0.7" opacity="0.85"/>
<path d="M571.1,238.09h6.2" stroke="#6a3a8a" stroke-width="0.9" stroke-dasharray="1.5 0.6" opacity="0.8"/>
<path d="M585,238.19h2.8" stroke="#a0602a" stroke-width="0.7" opacity="0.85"/>
<path d="M591.6,239.09h3.6" stroke="#4a8aa8" stroke-width="0.9" opacity="0.8"/>
<path d="M562,242.35H589.6" stroke="#7a62f6" stroke-width="1.15"/>
<path d="M562.2,240.85l4.6,1.5" stroke="#3a3a48" stroke-width="0.7" opacity="0.85"/>
<path d="M571.1,241.35h6.9" stroke="#80406a" stroke-width="0.9" stroke-dasharray="1.5 0.6" opacity="0.8"/>
<path d="M585,241.45h2.8" stroke="#a0602a" stroke-width="0.7" opacity="0.85"/>
<path d="M591.6,242.35h5.2" stroke="#4a8aa8" stroke-width="0.9" opacity="0.8"/>
<path d="M562,245.62H589.6" stroke="#7a62f6" stroke-width="1.15"/>
<path d="M562.2,244.12l4.6,1.5" stroke="#3a3a48" stroke-width="0.7" opacity="0.85"/>
<path d="M571.1,244.62h7.6" stroke="#3a5a8a" stroke-width="0.9" stroke-dasharray="1.5 0.6" opacity="0.8"/>
<path d="M585,244.72h2.8" stroke="#a0602a" stroke-width="0.7" opacity="0.85"/>
<path d="M591.6,245.62h5.2" stroke="#4a8aa8" stroke-width="0.9" opacity="0.8"/>
<path d="M562,248.88H589.6" stroke="#7a62f6" stroke-width="1.15"/>
<path d="M562.2,247.38l4.6,1.5" stroke="#3a3a48" stroke-width="0.7" opacity="0.85"/>
<path d="M571.1,247.88h6.2" stroke="#6a3a8a" stroke-width="0.9" stroke-dasharray="1.5 0.6" opacity="0.8"/>
<path d="M585,247.98h2.8" stroke="#a0602a" stroke-width="0.7" opacity="0.85"/>
<path d="M591.6,248.88h5.2" stroke="#4a8aa8" stroke-width="0.9" opacity="0.8"/>
<path d="M562,252.15H589.6" stroke="#7a62f6" stroke-width="1.15"/>
<path d="M562.2,250.65l4.6,1.5" stroke="#3a3a48" stroke-width="0.7" opacity="0.85"/>
<path d="M571.1,251.15h6.9" stroke="#80406a" stroke-width="0.9" stroke-dasharray="1.5 0.6" opacity="0.8"/>
<path d="M585,251.25h2.8" stroke="#a0602a" stroke-width="0.7" opacity="0.85"/>
<path d="M591.6,252.15h5.2" stroke="#4a8aa8" stroke-width="0.9" opacity="0.8"/>
<path d="M562,255.41H589.6" stroke="#7a62f6" stroke-width="1.15"/>
<path d="M562.2,253.91l4.6,1.5" stroke="#3a3a48" stroke-width="0.7" opacity="0.85"/>
<path d="M571.1,254.41h7.6" stroke="#3a5a8a" stroke-width="0.9" stroke-dasharray="1.5 0.6" opacity="0.8"/>
<path d="M585,254.51h2.8" stroke="#a0602a" stroke-width="0.7" opacity="0.85"/>
<path d="M591.6,255.41h5.2" stroke="#4a8aa8" stroke-width="0.9" opacity="0.8"/>
<path d="M562,258.68H589.6" stroke="#7a62f6" stroke-width="1.15"/>
<path d="M562.2,257.18l4.6,1.5" stroke="#3a3a48" stroke-width="0.7" opacity="0.85"/>
<path d="M571.1,257.68h6.2" stroke="#6a3a8a" stroke-width="0.9" stroke-dasharray="1.5 0.6" opacity="0.8"/>
<path d="M585,257.78h2.8" stroke="#a0602a" stroke-width="0.7" opacity="0.85"/>
<path d="M591.6,258.68h5.2" stroke="#4a8aa8" stroke-width="0.9" opacity="0.8"/>
<path d="M562,261.94H589.6" stroke="#7a62f6" stroke-width="1.15"/>
<path d="M562.2,260.44l4.6,1.5" stroke="#3a3a48" stroke-width="0.7" opacity="0.85"/>
<path d="M571.1,260.94h6.9" stroke="#80406a" stroke-width="0.9" stroke-dasharray="1.5 0.6" opacity="0.8"/>
<path d="M585,261.04h2.8" stroke="#a0602a" stroke-width="0.7" opacity="0.85"/>
<path d="M591.6,261.94h5.2" stroke="#4a8aa8" stroke-width="0.9" opacity="0.8"/>
<path d="M562,265.21H589.6" stroke="#7a62f6" stroke-width="1.15"/>
<path d="M562.2,263.71l4.6,1.5" stroke="#3a3a48" stroke-width="0.7" opacity="0.85"/>
<path d="M571.1,264.21h7.6" stroke="#3a5a8a" stroke-width="0.9" stroke-dasharray="1.5 0.6" opacity="0.8"/>
<path d="M585,264.31h2.8" stroke="#a0602a" stroke-width="0.7" opacity="0.85"/>
<path d="M591.6,265.21h5.2" stroke="#4a8aa8" stroke-width="0.9" opacity="0.8"/>
<rect x="589.8" y="203.2" width="27.2" height="78.2" fill="none" stroke="#444" stroke-width="0.85"/>
<path d="M617,209.1h3.2l1.4,-1.2" stroke="#444" stroke-width="0.55" fill="none"/>
<path d="M610.8,209.1h1.4" stroke="#d08a28" stroke-width="0.9" opacity="0.8"/><path d="M612.2,209.1h2.6" stroke="#4a68b8" stroke-width="0.9" opacity="0.8"/>
<path d="M617,211.9h3.2l1.4,-1.2" stroke="#444" stroke-width="0.55" fill="none"/>
<path d="M610.8,211.9h1.4" stroke="#d08a28" stroke-width="0.9" opacity="0.8"/><path d="M612.2,211.9h2.6" stroke="#4a68b8" stroke-width="0.9" opacity="0.8"/>
<path d="M617,215.3h3.2l1.4,-1.2" stroke="#444" stroke-width="0.55" fill="none"/>
<path d="M610.8,215.3h1.4" stroke="#d08a28" stroke-width="0.9" opacity="0.8"/><path d="M612.2,215.3h2.6" stroke="#4a68b8" stroke-width="0.9" opacity="0.8"/>
<path d="M617,231.7H638.8l1.4,-1.3" stroke="#7a62f6" stroke-width="1.1" fill="none"/>
<path d="M623,230.4h6.5" stroke="#b03a6a" stroke-width="0.8" stroke-dasharray="1.6 0.6" opacity="0.8"/>
<path d="M619.6,230.8h2M634.8,231.5l4.2,-1.5" stroke="#3a3a48" stroke-width="0.7" fill="none"/>
<path d="M609.8,231.7h2.2" stroke="#d08a28" stroke-width="0.9"/><path d="M612,231.7h2.6" stroke="#3a58c0" stroke-width="0.9"/>
<path d="M617,238.2H638.8l1.4,-1.3" stroke="#7a62f6" stroke-width="1.1" fill="none"/>
<path d="M623,236.9h6.5" stroke="#b03a6a" stroke-width="0.8" stroke-dasharray="1.6 0.6" opacity="0.8"/>
<path d="M619.6,237.3h2M634.8,238l4.2,-1.5" stroke="#3a3a48" stroke-width="0.7" fill="none"/>
<path d="M609.8,238.2h2.2" stroke="#d08a28" stroke-width="0.9"/><path d="M612,238.2h2.6" stroke="#3a58c0" stroke-width="0.9"/>
<path d="M617,244.7H638.8l1.4,-1.3" stroke="#7a62f6" stroke-width="1.1" fill="none"/>
<path d="M623,243.4h6.5" stroke="#b03a6a" stroke-width="0.8" stroke-dasharray="1.6 0.6" opacity="0.8"/>
<path d="M619.6,243.8h2M634.8,244.5l4.2,-1.5" stroke="#3a3a48" stroke-width="0.7" fill="none"/>
<path d="M609.8,244.7h2.2" stroke="#d08a28" stroke-width="0.9"/><path d="M612,244.7h2.6" stroke="#3a58c0" stroke-width="0.9"/>
<path d="M617,251.2H638.8l1.4,-1.3" stroke="#7a62f6" stroke-width="1.1" fill="none"/>
<path d="M623,249.9h6.5" stroke="#b03a6a" stroke-width="0.8" stroke-dasharray="1.6 0.6" opacity="0.8"/>
<path d="M619.6,250.3h2M634.8,251l4.2,-1.5" stroke="#3a3a48" stroke-width="0.7" fill="none"/>
<path d="M609.8,251.2h2.2" stroke="#d08a28" stroke-width="0.9"/><path d="M612,251.2h2.6" stroke="#3a58c0" stroke-width="0.9"/>
<circle cx="588.2" cy="271.7" r="1.35" fill="#fff" stroke="#222" stroke-width="0.6"/>
<path d="M591.6,272l2.4,-1.3" stroke="#444" stroke-width="0.6"/>
<circle cx="588.2" cy="274.9" r="1.35" fill="#fff" stroke="#222" stroke-width="0.6"/>
<path d="M591.6,275.2l2.4,-1.3" stroke="#444" stroke-width="0.6"/>
<circle cx="588.2" cy="278" r="1.35" fill="#fff" stroke="#222" stroke-width="0.6"/>
<path d="M591.6,278.3l2.4,-1.3" stroke="#444" stroke-width="0.6"/>
<text x="603.3" y="201.3" font-size="3.3" font-weight="bold" text-anchor="middle" fill="#422">U3</text>
<text x="603.3" y="206.3" font-size="2.4" font-weight="bold" text-anchor="middle" fill="#4a5aa0">SRAM256K</text>
<text x="603.3" y="280" font-size="2.4" font-weight="bold" text-anchor="middle" fill="#4a68b8">GND</text>
<path d="M586.8,278H580.3" stroke="#7a62f6" stroke-width="0.9" fill="none"/>
<path d="M580.3,278V284.1" stroke="#e09a28" stroke-width="0.9" fill="none"/>
<path d="M576.5,284h7.6l-3.8,4.4z" fill="#666"/>
<path d="M562,317.3H588.2" stroke="#7a62f6" stroke-width="1.15"/>
<path d="M562.2,315.8l4.6,1.5" stroke="#3a3a48" stroke-width="0.7" opacity="0.85"/>
<path d="M571.1,316.3h6.2" stroke="#6a3a8a" stroke-width="0.9" stroke-dasharray="1.5 0.6" opacity="0.8"/>
<path d="M583.6,316.4h2.8" stroke="#a0602a" stroke-width="0.7" opacity="0.85"/>
<path d="M590.2,317.3h3.6" stroke="#4a8aa8" stroke-width="0.9" opacity="0.8"/>
<path d="M562,320.56H588.2" stroke="#7a62f6" stroke-width="1.15"/>
<path d="M562.2,319.06l4.6,1.5" stroke="#3a3a48" stroke-width="0.7" opacity="0.85"/>
<path d="M571.1,319.56h6.9" stroke="#80406a" stroke-width="0.9" stroke-dasharray="1.5 0.6" opacity="0.8"/>
<path d="M583.6,319.66h2.8" stroke="#a0602a" stroke-width="0.7" opacity="0.85"/>
<path d="M590.2,320.56h3.6" stroke="#4a8aa8" stroke-width="0.9" opacity="0.8"/>
<path d="M562,323.83H588.2" stroke="#7a62f6" stroke-width="1.15"/>
<path d="M562.2,322.33l4.6,1.5" stroke="#3a3a48" stroke-width="0.7" opacity="0.85"/>
<path d="M571.1,322.83h7.6" stroke="#3a5a8a" stroke-width="0.9" stroke-dasharray="1.5 0.6" opacity="0.8"/>
<path d="M583.6,322.93h2.8" stroke="#a0602a" stroke-width="0.7" opacity="0.85"/>
<path d="M590.2,323.83h3.6" stroke="#4a8aa8" stroke-width="0.9" opacity="0.8"/>
<path d="M562,327.09H588.2" stroke="#7a62f6" stroke-width="1.15"/>
<path d="M562.2,325.59l4.6,1.5" stroke="#3a3a48" stroke-width="0.7" opacity="0.85"/>
<path d="M571.1,326.09h6.2" stroke="#6a3a8a" stroke-width="0.9" stroke-dasharray="1.5 0.6" opacity="0.8"/>
<path d="M583.6,326.19h2.8" stroke="#a0602a" stroke-width="0.7" opacity="0.85"/>
<path d="M590.2,327.09h3.6" stroke="#4a8aa8" stroke-width="0.9" opacity="0.8"/>
<path d="M562,330.36H588.2" stroke="#7a62f6" stroke-width="1.15"/>
<path d="M562.2,328.86l4.6,1.5" stroke="#3a3a48" stroke-width="0.7" opacity="0.85"/>
<path d="M571.1,329.36h6.9" stroke="#80406a" stroke-width="0.9" stroke-dasharray="1.5 0.6" opacity="0.8"/>
<path d="M583.6,329.46h2.8" stroke="#a0602a" stroke-width="0.7" opacity="0.85"/>
<path d="M590.2,330.36h3.6" stroke="#4a8aa8" stroke-width="0.9" opacity="0.8"/>
<path d="M562,333.62H588.2" stroke="#7a62f6" stroke-width="1.15"/>
<path d="M562.2,332.12l4.6,1.5" stroke="#3a3a48" stroke-width="0.7" opacity="0.85"/>
<path d="M571.1,332.62h7.6" stroke="#3a5a8a" stroke-width="0.9" stroke-dasharray="1.5 0.6" opacity="0.8"/>
<path d="M583.6,332.72h2.8" stroke="#a0602a" stroke-width="0.7" opacity="0.85"/>
<path d="M590.2,333.62h3.6" stroke="#4a8aa8" stroke-width="0.9" opacity="0.8"/>
<path d="M562,336.89H588.2" stroke="#7a62f6" stroke-width="1.15"/>
<path d="M562.2,335.39l4.6,1.5" stroke="#3a3a48" stroke-width="0.7" opacity="0.85"/>
<path d="M571.1,335.89h6.2" stroke="#6a3a8a" stroke-width="0.9" stroke-dasharray="1.5 0.6" opacity="0.8"/>
<path d="M583.6,335.99h2.8" stroke="#a0602a" stroke-width="0.7" opacity="0.85"/>
<path d="M590.2,336.89h3.6" stroke="#4a8aa8" stroke-width="0.9" opacity="0.8"/>
<path d="M562,340.15H588.2" stroke="#7a62f6" stroke-width="1.15"/>
<path d="M562.2,338.65l4.6,1.5" stroke="#3a3a48" stroke-width="0.7" opacity="0.85"/>
<path d="M571.1,339.15h6.9" stroke="#80406a" stroke-width="0.9" stroke-dasharray="1.5 0.6" opacity="0.8"/>
<path d="M583.6,339.25h2.8" stroke="#a0602a" stroke-width="0.7" opacity="0.85"/>
<path d="M590.2,340.15h3.6" stroke="#4a8aa8" stroke-width="0.9" opacity="0.8"/>
<path d="M562,343.42H588.2" stroke="#7a62f6" stroke-width="1.15"/>
<path d="M562.2,341.92l4.6,1.5" stroke="#3a3a48" stroke-width="0.7" opacity="0.85"/>
<path d="M571.1,342.42h7.6" stroke="#3a5a8a" stroke-width="0.9" stroke-dasharray="1.5 0.6" opacity="0.8"/>
<path d="M583.6,342.52h2.8" stroke="#a0602a" stroke-width="0.7" opacity="0.85"/>
<path d="M590.2,343.42h3.6" stroke="#4a8aa8" stroke-width="0.9" opacity="0.8"/>
<path d="M562,346.68H588.2" stroke="#7a62f6" stroke-width="1.15"/>
<path d="M562.2,345.18l4.6,1.5" stroke="#3a3a48" stroke-width="0.7" opacity="0.85"/>
<path d="M571.1,345.68h6.2" stroke="#6a3a8a" stroke-width="0.9" stroke-dasharray="1.5 0.6" opacity="0.8"/>
<path d="M583.6,345.78h2.8" stroke="#a0602a" stroke-width="0.7" opacity="0.85"/>
<path d="M590.2,346.68h3.6" stroke="#4a8aa8" stroke-width="0.9" opacity="0.8"/>
<path d="M562,349.95H588.2" stroke="#7a62f6" stroke-width="1.15"/>
<path d="M562.2,348.45l4.6,1.5" stroke="#3a3a48" stroke-width="0.7" opacity="0.85"/>
<path d="M571.1,348.95h6.9" stroke="#80406a" stroke-width="0.9" stroke-dasharray="1.5 0.6" opacity="0.8"/>
<path d="M583.6,349.05h2.8" stroke="#a0602a" stroke-width="0.7" opacity="0.85"/>
<path d="M590.2,349.95h5.2" stroke="#4a8aa8" stroke-width="0.9" opacity="0.8"/>
<path d="M562,353.21H588.2" stroke="#7a62f6" stroke-width="1.15"/>
<path d="M562.2,351.71l4.6,1.5" stroke="#3a3a48" stroke-width="0.7" opacity="0.85"/>
<path d="M571.1,352.21h7.6" stroke="#3a5a8a" stroke-width="0.9" stroke-dasharray="1.5 0.6" opacity="0.8"/>
<path d="M583.6,352.31h2.8" stroke="#a0602a" stroke-width="0.7" opacity="0.85"/>
<path d="M590.2,353.21h5.2" stroke="#4a8aa8" stroke-width="0.9" opacity="0.8"/>
<path d="M562,356.48H588.2" stroke="#7a62f6" stroke-width="1.15"/>
<path d="M562.2,354.98l4.6,1.5" stroke="#3a3a48" stroke-width="0.7" opacity="0.85"/>
<path d="M571.1,355.48h6.2" stroke="#6a3a8a" stroke-width="0.9" stroke-dasharray="1.5 0.6" opacity="0.8"/>
<path d="M583.6,355.58h2.8" stroke="#a0602a" stroke-width="0.7" opacity="0.85"/>
<path d="M590.2,356.48h5.2" stroke="#4a8aa8" stroke-width="0.9" opacity="0.8"/>
<path d="M562,359.74H588.2" stroke="#7a62f6" stroke-width="1.15"/>
<path d="M562.2,358.24l4.6,1.5" stroke="#3a3a48" stroke-width="0.7" opacity="0.85"/>
<path d="M571.1,358.74h6.9" stroke="#80406a" stroke-width="0.9" stroke-dasharray="1.5 0.6" opacity="0.8"/>
<path d="M583.6,358.84h2.8" stroke="#a0602a" stroke-width="0.7" opacity="0.85"/>
<path d="M590.2,359.74h5.2" stroke="#4a8aa8" stroke-width="0.9" opacity="0.8"/>
<path d="M562,363.01H588.2" stroke="#7a62f6" stroke-width="1.15"/>
<path d="M562.2,361.51l4.6,1.5" stroke="#3a3a48" stroke-width="0.7" opacity="0.85"/>
<path d="M571.1,362.01h7.6" stroke="#3a5a8a" stroke-width="0.9" stroke-dasharray="1.5 0.6" opacity="0.8"/>
<path d="M583.6,362.11h2.8" stroke="#a0602a" stroke-width="0.7" opacity="0.85"/>
<path d="M590.2,363.01h5.2" stroke="#4a8aa8" stroke-width="0.9" opacity="0.8"/>
<path d="M562,366.27H588.2" stroke="#7a62f6" stroke-width="1.15"/>
<path d="M562.2,364.77l4.6,1.5" stroke="#3a3a48" stroke-width="0.7" opacity="0.85"/>
<path d="M571.1,365.27h6.2" stroke="#6a3a8a" stroke-width="0.9" stroke-dasharray="1.5 0.6" opacity="0.8"/>
<path d="M583.6,365.38h2.8" stroke="#a0602a" stroke-width="0.7" opacity="0.85"/>
<path d="M590.2,366.27h5.2" stroke="#4a8aa8" stroke-width="0.9" opacity="0.8"/>
<path d="M562,369.54H588.2" stroke="#7a62f6" stroke-width="1.15"/>
<path d="M562.2,368.04l4.6,1.5" stroke="#3a3a48" stroke-width="0.7" opacity="0.85"/>
<path d="M571.1,368.54h6.9" stroke="#80406a" stroke-width="0.9" stroke-dasharray="1.5 0.6" opacity="0.8"/>
<path d="M583.6,368.64h2.8" stroke="#a0602a" stroke-width="0.7" opacity="0.85"/>
<path d="M590.2,369.54h5.2" stroke="#4a8aa8" stroke-width="0.9" opacity="0.8"/>
<path d="M562,372.8H588.2" stroke="#7a62f6" stroke-width="1.15"/>
<path d="M562.2,371.3l4.6,1.5" stroke="#3a3a48" stroke-width="0.7" opacity="0.85"/>
<path d="M571.1,371.8h7.6" stroke="#3a5a8a" stroke-width="0.9" stroke-dasharray="1.5 0.6" opacity="0.8"/>
<path d="M583.6,371.9h2.8" stroke="#a0602a" stroke-width="0.7" opacity="0.85"/>
<path d="M590.2,372.8h5.2" stroke="#4a8aa8" stroke-width="0.9" opacity="0.8"/>
<rect x="588.4" y="310.8" width="26.4" height="78.5" fill="none" stroke="#444" stroke-width="0.85"/>
<path d="M614.8,316.7h3.2l1.4,-1.2" stroke="#444" stroke-width="0.55" fill="none"/>
<path d="M608.6,316.7h1.4" stroke="#d08a28" stroke-width="0.9" opacity="0.8"/><path d="M610,316.7h2.6" stroke="#4a68b8" stroke-width="0.9" opacity="0.8"/>
<path d="M614.8,319.5h3.2l1.4,-1.2" stroke="#444" stroke-width="0.55" fill="none"/>
<path d="M608.6,319.5h1.4" stroke="#d08a28" stroke-width="0.9" opacity="0.8"/><path d="M610,319.5h2.6" stroke="#4a68b8" stroke-width="0.9" opacity="0.8"/>
<path d="M614.8,322.9h3.2l1.4,-1.2" stroke="#444" stroke-width="0.55" fill="none"/>
<path d="M608.6,322.9h1.4" stroke="#d08a28" stroke-width="0.9" opacity="0.8"/><path d="M610,322.9h2.6" stroke="#4a68b8" stroke-width="0.9" opacity="0.8"/>
<path d="M614.8,339.3H638.8l1.4,-1.3" stroke="#7a62f6" stroke-width="1.1" fill="none"/>
<path d="M620.8,338h6.5" stroke="#b03a6a" stroke-width="0.8" stroke-dasharray="1.6 0.6" opacity="0.8"/>
<path d="M617.4,338.4h2M634.8,339.1l4.2,-1.5" stroke="#3a3a48" stroke-width="0.7" fill="none"/>
<path d="M607.6,339.3h2.2" stroke="#d08a28" stroke-width="0.9"/><path d="M609.8,339.3h2.6" stroke="#3a58c0" stroke-width="0.9"/>
<path d="M614.8,345.8H638.8l1.4,-1.3" stroke="#7a62f6" stroke-width="1.1" fill="none"/>
<path d="M620.8,344.5h6.5" stroke="#b03a6a" stroke-width="0.8" stroke-dasharray="1.6 0.6" opacity="0.8"/>
<path d="M617.4,344.9h2M634.8,345.6l4.2,-1.5" stroke="#3a3a48" stroke-width="0.7" fill="none"/>
<path d="M607.6,345.8h2.2" stroke="#d08a28" stroke-width="0.9"/><path d="M609.8,345.8h2.6" stroke="#3a58c0" stroke-width="0.9"/>
<path d="M614.8,352.3H638.8l1.4,-1.3" stroke="#7a62f6" stroke-width="1.1" fill="none"/>
<path d="M620.8,351h6.5" stroke="#b03a6a" stroke-width="0.8" stroke-dasharray="1.6 0.6" opacity="0.8"/>
<path d="M617.4,351.4h2M634.8,352.1l4.2,-1.5" stroke="#3a3a48" stroke-width="0.7" fill="none"/>
<path d="M607.6,352.3h2.2" stroke="#d08a28" stroke-width="0.9"/><path d="M609.8,352.3h2.6" stroke="#3a58c0" stroke-width="0.9"/>
<path d="M614.8,358.8H638.8l1.4,-1.3" stroke="#7a62f6" stroke-width="1.1" fill="none"/>
<path d="M620.8,357.5h6.5" stroke="#b03a6a" stroke-width="0.8" stroke-dasharray="1.6 0.6" opacity="0.8"/>
<path d="M617.4,357.9h2M634.8,358.6l4.2,-1.5" stroke="#3a3a48" stroke-width="0.7" fill="none"/>
<path d="M607.6,358.8h2.2" stroke="#d08a28" stroke-width="0.9"/><path d="M609.8,358.8h2.6" stroke="#3a58c0" stroke-width="0.9"/>
<circle cx="586.8" cy="379.3" r="1.35" fill="#fff" stroke="#222" stroke-width="0.6"/>
<path d="M590.2,379.6l2.4,-1.3" stroke="#444" stroke-width="0.6"/>
<circle cx="586.8" cy="382.5" r="1.35" fill="#fff" stroke="#222" stroke-width="0.6"/>
<path d="M590.2,382.8l2.4,-1.3" stroke="#444" stroke-width="0.6"/>
<circle cx="586.8" cy="385.6" r="1.35" fill="#fff" stroke="#222" stroke-width="0.6"/>
<path d="M590.2,385.9l2.4,-1.3" stroke="#444" stroke-width="0.6"/>
<text x="601.5" y="308.9" font-size="3.3" font-weight="bold" text-anchor="middle" fill="#422">U4</text>
<text x="601.5" y="313.9" font-size="2.4" font-weight="bold" text-anchor="middle" fill="#4a5aa0">SRAM256K</text>
<text x="601.5" y="387.9" font-size="2.4" font-weight="bold" text-anchor="middle" fill="#4a68b8">GND</text>
<path d="M585.4,385.6H578.8" stroke="#7a62f6" stroke-width="0.9" fill="none"/>
<path d="M578.8,385.6V392" stroke="#e09a28" stroke-width="0.9" fill="none"/>
<path d="M575,391.9h7.6l-3.8,4.4z" fill="#666"/>
<path d="M358.3,183.6H640.6V365.6M360.4,196.7H560.8V373.6M385.6,196.7V373.6M461,183.6V365.6" stroke="#0808ff" stroke-width="2.3" fill="none" stroke-linejoin="miter"/>
<path d="M349.7,181.6H356.4L358.2,183.6L356.4,185.6H349.7z" fill="#fffdf2" stroke="#e6a93c" stroke-width="0.7"/><path d="M351.9,182.7l2.6,1.6" stroke="#6a2ab0" stroke-width="0.8"/>
<path d="M351.6,194.7H358.4L360.2,196.7L358.4,198.7H351.6z" fill="#fffdf2" stroke="#e6a93c" stroke-width="0.7"/><path d="M353.8,195.8l2.6,1.6" stroke="#6a2ab0" stroke-width="0.8"/>
<path d="M328.2,405H335.8L337.6,407L335.8,409H328.2z" fill="#fffdf2" stroke="#e6a93c" stroke-width="0.7"/><path d="M330.4,406.1l2.6,1.6" stroke="#6a2ab0" stroke-width="0.8"/>
<path d="M328.2,417.8H335.8L337.6,419.8L335.8,421.8H328.2z" fill="#fffdf2" stroke="#e6a93c" stroke-width="0.7"/><path d="M330.4,418.9l2.6,1.6" stroke="#6a2ab0" stroke-width="0.8"/>
<path d="M328.2,424.6H335.8L337.6,426.6L335.8,428.6H328.2z" fill="#fffdf2" stroke="#e6a93c" stroke-width="0.7"/><path d="M330.4,425.7l2.6,1.6" stroke="#6a2ab0" stroke-width="0.8"/>
<path d="M363,180.2h9" stroke="#556" stroke-width="0.9" stroke-dasharray="1.5 0.6" opacity="0.7"/>
<path d="M464,180.2h9" stroke="#556" stroke-width="0.9" stroke-dasharray="1.5 0.6" opacity="0.7"/>
<path d="M366,193.6h10" stroke="#566" stroke-width="0.9" stroke-dasharray="1.5 0.6" opacity="0.7"/>
<path d="M468,192.2h10" stroke="#566" stroke-width="0.9" stroke-dasharray="1.5 0.6" opacity="0.7"/>
<path d="M342,404.4h5" stroke="#556" stroke-width="0.9" stroke-dasharray="1.5 0.6" opacity="0.7"/>
<path d="M342,417.3h6" stroke="#556" stroke-width="0.9" stroke-dasharray="1.5 0.6" opacity="0.7"/>
<path d="M342,424.2h5" stroke="#556" stroke-width="0.9" stroke-dasharray="1.5 0.6" opacity="0.7"/>
<path d="M661.4,399.1H766.6M661.4,414.2H766.6" stroke="#7a62f6" stroke-width="0.95"/>
<path d="M661.4,399.1V404.6M661.4,407.6V414.2" stroke="#7a62f6" stroke-width="0.95"/>
<path d="M659.5,404.7h3.8M659.5,407.4h3.8" stroke="#c88a20" stroke-width="0.9"/>
<text x="664.6" y="403.4" font-size="3" fill="#ff7a22">C1</text>
<text x="664.4" y="410.2" font-size="3.5" font-weight="bold" fill="#ff7a22">0.1uF,50V</text>
<path d="M664.8,408.8l4.2,-3.6" stroke="#ff7a22" stroke-width="0.5"/>
<path d="M697.5,399.1V404.6M697.5,407.6V414.2" stroke="#7a62f6" stroke-width="0.95"/>
<path d="M695.6,404.7h3.8M695.6,407.4h3.8" stroke="#c88a20" stroke-width="0.9"/>
<text x="700.7" y="403.4" font-size="3" fill="#ff7a22">C2</text>
<text x="700.5" y="410.2" font-size="3.5" font-weight="bold" fill="#ff7a22">0.1uF,50V</text>
<path d="M700.9,408.8l4.2,-3.6" stroke="#ff7a22" stroke-width="0.5"/>
<path d="M733.6,399.1V404.6M733.6,407.6V414.2" stroke="#7a62f6" stroke-width="0.95"/>
<path d="M731.7,404.7h3.8M731.7,407.4h3.8" stroke="#c88a20" stroke-width="0.9"/>
<text x="736.8" y="403.4" font-size="3" fill="#ff7a22">C3</text>
<text x="736.6" y="410.2" font-size="3.5" font-weight="bold" fill="#ff7a22">0.1uF,50V</text>
<path d="M737,408.8l4.2,-3.6" stroke="#ff7a22" stroke-width="0.5"/>
<path d="M766.6,399.1V404.6M766.6,407.6V414.2" stroke="#7a62f6" stroke-width="0.95"/>
<path d="M764.7,404.7h3.8M764.7,407.4h3.8" stroke="#c88a20" stroke-width="0.9"/>
<text x="769.8" y="403.4" font-size="3" fill="#ff7a22">C4</text>
<text x="769.6" y="410.2" font-size="3.5" font-weight="bold" fill="#ff7a22">0.1uF,50V</text>
<path d="M770,408.8l4.2,-3.6" stroke="#ff7a22" stroke-width="0.5"/>
<path d="M661.4,399.1V392.2M659.6,391.3h3.6M660,392.9l1.4,1.6l1.4,-1.6" stroke="#334" stroke-width="0.7" fill="none"/>
<rect x="658.6" y="402.2" width="1.3" height="3.6" fill="#222"/>
<path d="M766.6,414.2V424.4" stroke="#e09a28" stroke-width="0.9"/>
<rect x="763.8" y="415.2" width="1.3" height="3.6" fill="#111"/>
<path d="M762.7,424.3h7.6l-3.8,4.5z" fill="#666"/>
<text x="285.2" y="456.3" font-size="3.1" font-weight="bold" fill="#111" textLength="91" lengthAdjust="spacingAndGlyphs">THIS DOCUMENT CONTAINS INFORMATION PROPRIETARY</text>
<text x="285.2" y="460.65" font-size="3.1" font-weight="bold" fill="#111" textLength="81.6" lengthAdjust="spacingAndGlyphs">TO CADENCE DESIGN SYSTEMS INC. (CADENCE). USE</text>
<text x="285.2" y="465" font-size="3.1" font-weight="bold" fill="#111" textLength="91.6" lengthAdjust="spacingAndGlyphs">OR DISCLOSURE WITHOUT THE WRITTEN PERMISSION OF AN</text>
<text x="285.2" y="469.35" font-size="3.1" font-weight="bold" fill="#111" textLength="75.8" lengthAdjust="spacingAndGlyphs">OFFICER OF CADENCE IS EXPRESSLY FORBIDDEN.</text>
<text x="285.2" y="473.7" font-size="3.1" font-weight="bold" fill="#111" textLength="39" lengthAdjust="spacingAndGlyphs">COPYRIGHT (C) CADENCE</text>
<text transform="translate(581.6,477.6) scale(0.66,1)" font-size="13.8" fill="#111" stroke="#111" stroke-width="0.35" textLength="77.9" lengthAdjust="spacing">cadence</text>
<rect x="589.2" y="468.2" width="3.6" height="0.9" fill="#e02020"/>
<path d="M635.6,479.5V454.4H799.8M635.6,469.2H799.8M750.4,454.4V479.5M632.8,469.2h3" stroke="#444" stroke-width="0.8" fill="none"/>
<text x="637.2" y="457.8" font-size="2.4" font-weight="bold" fill="#111">TITLE</text>
<text x="637.2" y="472.4" font-size="2.4" font-weight="bold" fill="#111">DOCUMENT NUM</text>
<text x="752.2" y="457.8" font-size="2.4" font-weight="bold" fill="#111">DATE</text>
<text x="752.2" y="472.4" font-size="2.4" font-weight="bold" fill="#111">PAGE</text>
<text x="654" y="464.8" font-size="3.2" fill="#ff7a22">ram</text>
<text x="672" y="475.6" font-size="3.4" fill="#ff7a22">Prjye</text>
<text x="764.6" y="475.6" font-size="3.4" fill="#ff7a22">2 OF 2</text>
<text x="733" y="450.9" font-size="3.3" font-weight="bold" fill="#ff7a22" textLength="63.5" lengthAdjust="spacingAndGlyphs">Friday, October 10, 2025 11:58:55 AM</text>
</g>
</svg>
<div class="abs sb"><svg class="abs" style="left:0;top:0" width="16" height="608" viewBox="0 0 16 608"><path d="M4.4,11.6L8.1,7.2L11.8,11.6z" fill="#505050"/><path d="M4.4,596.4L8.1,600.8L11.8,596.4z" fill="#505050"/></svg></div>
<div class="abs sbthumb"></div>
<div class="abs tip">
<div class="abs l" style="top:9.3px"><span class="sx" style="letter-spacing:-0.3px;transform:scaleX(0.8957)">Modified By</span></div>
<div class="abs l" style="top:24.25px"><span class="sx" style="letter-spacing:-0.3px;transform:scaleX(0.9215)">Modified Date : 10/10/2025</span></div>
<div class="abs l" style="top:39.2px"><span class="sx" style="letter-spacing:-0.3px;transform:scaleX(0.9146)">Modified Time : 12:00:54</span></div>
<div class="abs l" style="top:54.15px"><span class="sx" style="letter-spacing:-0.3px;transform:scaleX(0.8253)">Comment :</span></div>
<div class="abs l" style="top:69.1px"><span class="sx" style="letter-spacing:-0.3px;transform:scaleX(0.9007)">Committed From : Version  1.1.2</span></div>
<div class="abs l" style="top:54.15px;left:64px"><span class="sx" style="letter-spacing:-0.3px;transform:scaleX(0.9203)">Added page 2 and bypass caps.</span></div>
</div>
<div class="abs blur"></div>
<div class="abs red"></div>
<svg class="abs" style="left:100px;top:672px" width="20" height="27" viewBox="0 0 20 27"><path d="M7.9,2C6.9,2 6.2,2.8 6.2,3.8V14.6L3.7,12.7C2.6,11.9 1.1,13 2,14.4L7.6,22.6C8.4,23.8 9.4,24.7 10.7,24.7H14.5C16.5,24.7 17.8,22 17.8,19V10.5C17.8,9 15.6,8.8 15.4,10.1C15.2,8.2 12.8,8 12.7,9.5C12.5,7.4 9.8,7.4 9.7,9V3.8C9.7,2.8 8.9,2 7.9,2z" fill="#fff" stroke="#1a2230" stroke-width="1.1" stroke-linejoin="round"/><path d="M9.7,9V12.8M12.7,9.5V13.2M15.4,10.1V13.4" stroke="#1a2230" stroke-width="0.9"/></svg>
</body></html>
